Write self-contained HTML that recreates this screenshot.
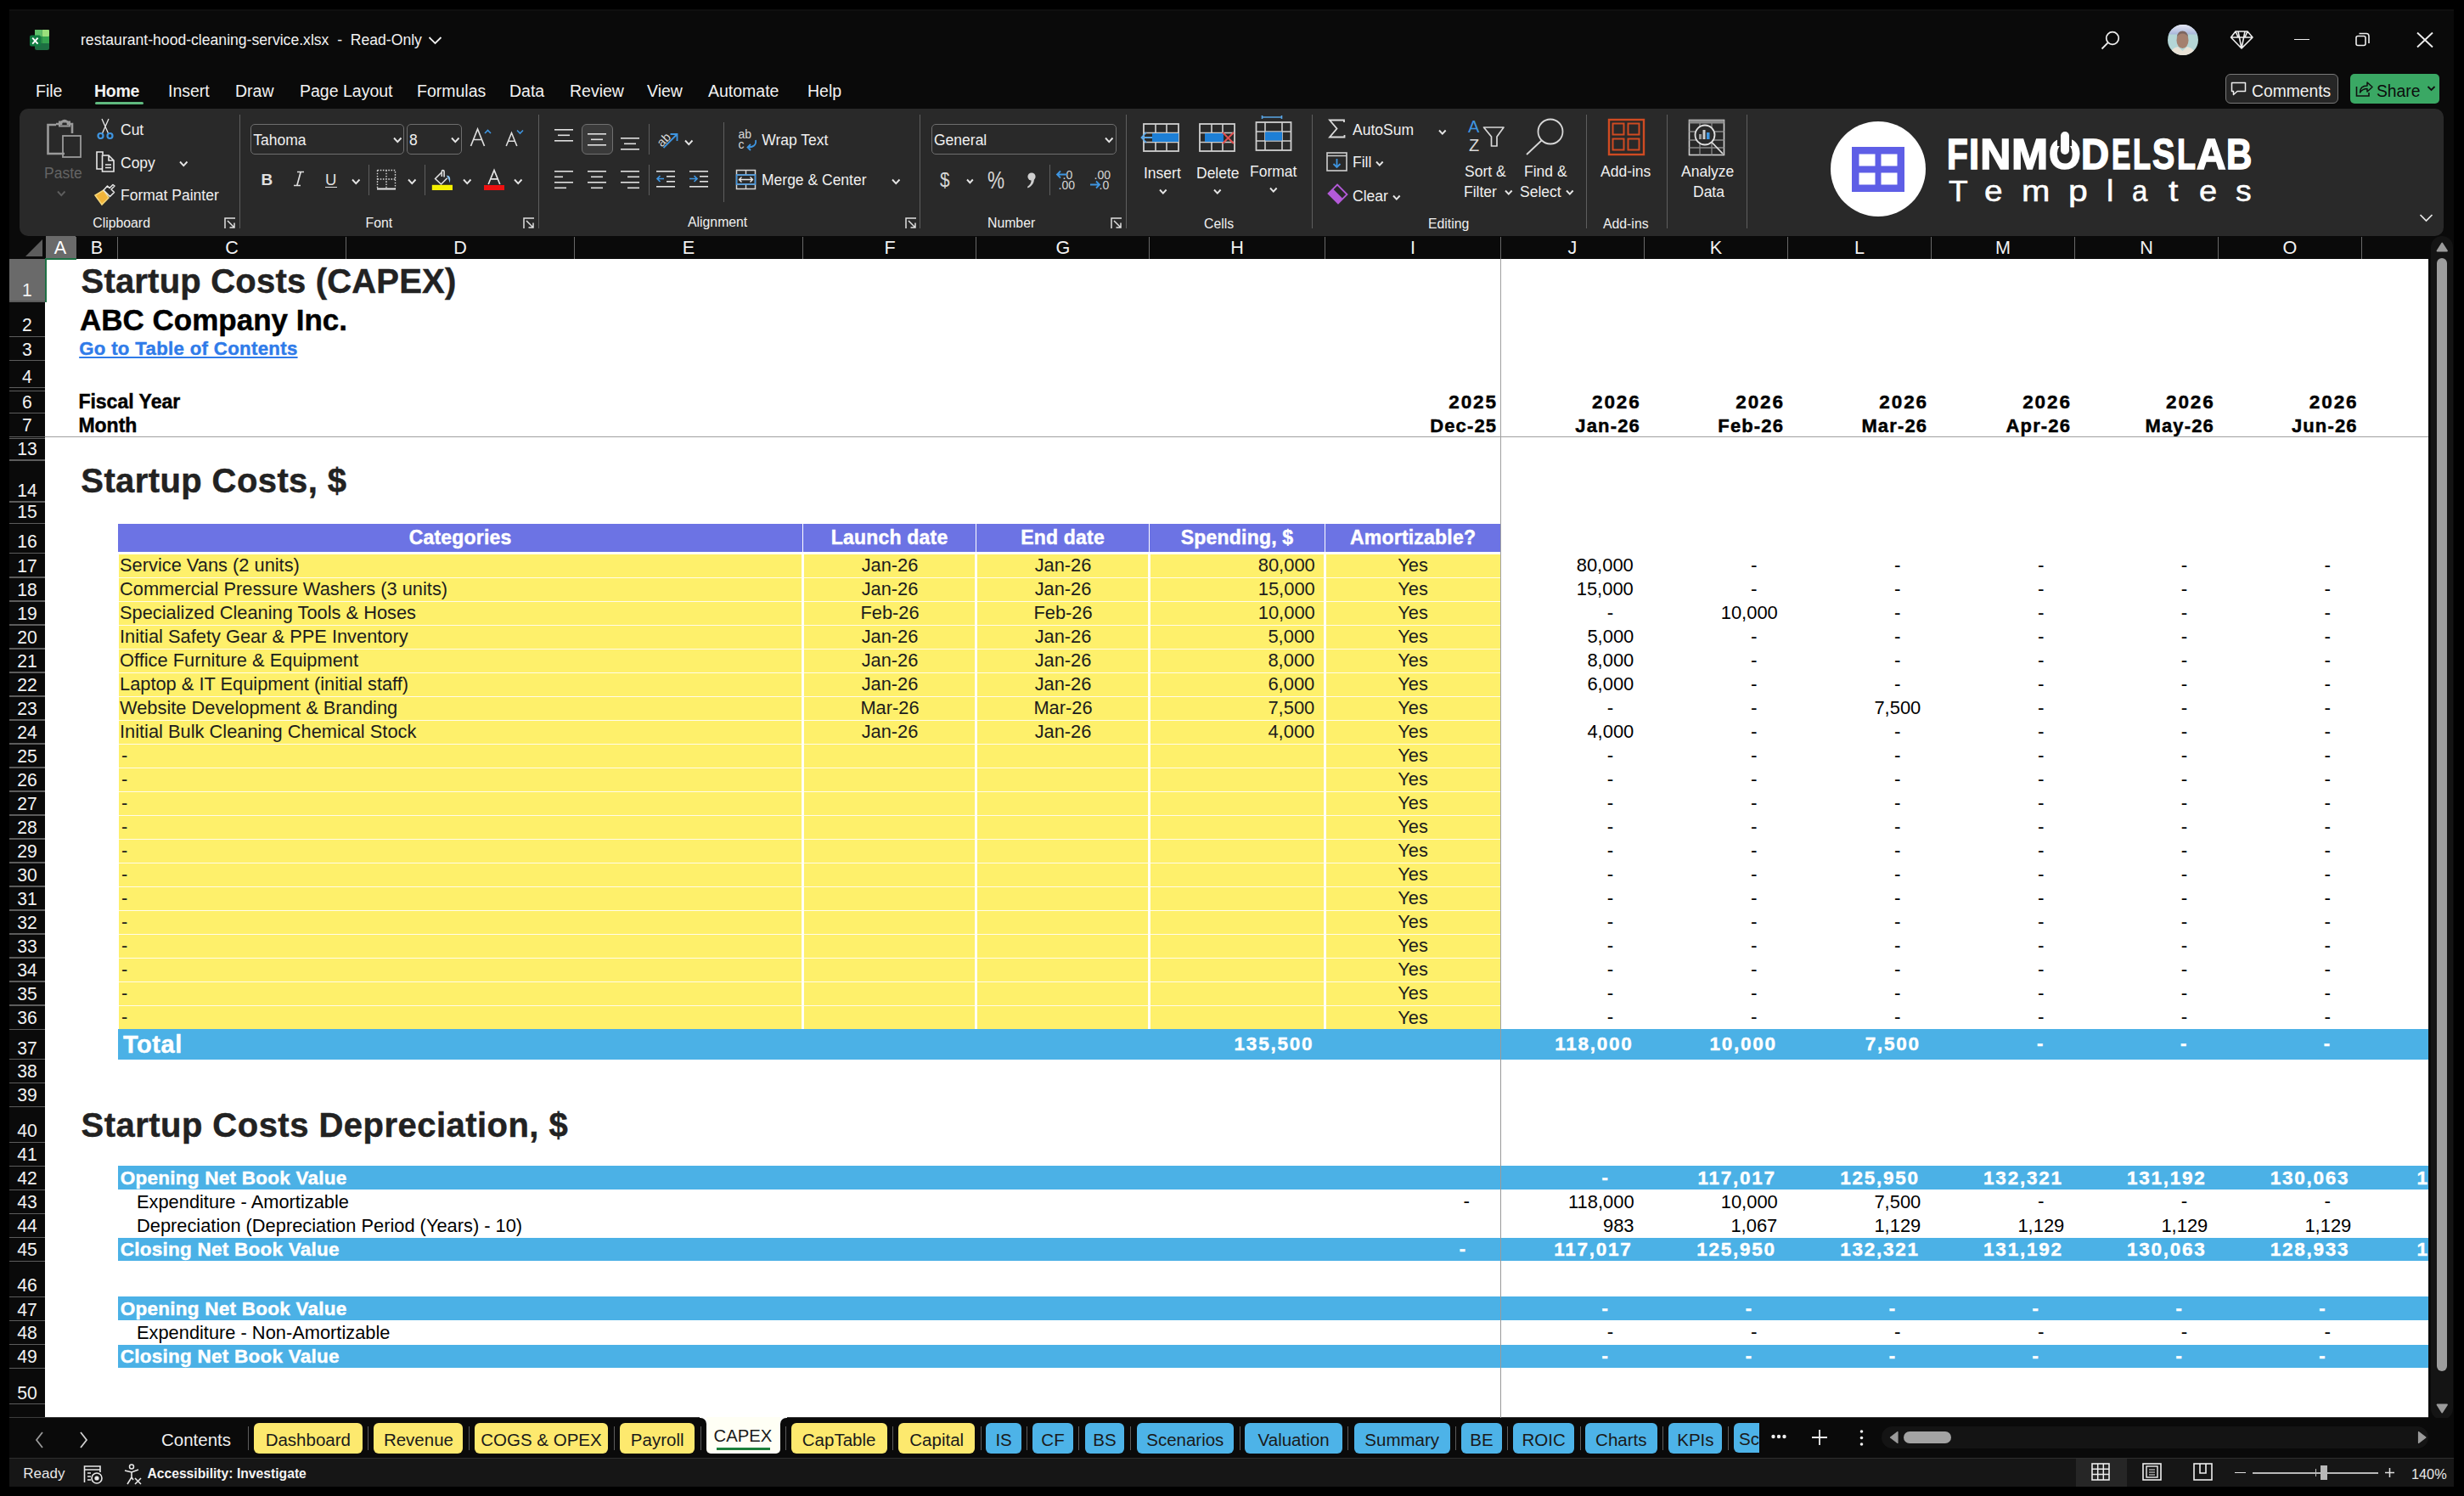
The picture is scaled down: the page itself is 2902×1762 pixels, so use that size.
<!DOCTYPE html><html><head><meta charset="utf-8"><style>
html,body{margin:0;padding:0;}
body{width:2902px;height:1762px;background:#000;position:relative;overflow:hidden;font-family:"Liberation Sans",sans-serif;}
.t{position:absolute;white-space:nowrap;line-height:1;}
.r{position:absolute;}
svg{position:absolute;overflow:visible;}
</style></head><body>
<div class="r" style="left:11.0px;top:10.8px;width:2879.0px;height:1740.2px;background:#0a0a0a;"></div>
<div class="r" style="left:11.0px;top:10.8px;width:2879.0px;height:2.7px;background:#0f0f0f;"></div>
<div class="r" style="left:23.0px;top:128.0px;width:2855.0px;height:149.8px;background:#292929;border-radius:10px;"></div>
<div class="r" style="left:53.0px;top:305.0px;width:2807.5px;height:1365.0px;background:#ffffff;"></div>
<div class="r" style="left:53.5px;top:278.0px;width:35.5px;height:26.5px;background:#6a6a6a;"></div>
<div class="r" style="left:88.5px;top:279.0px;width:1.2px;height:26.0px;background:#686868;"></div>
<div class="t" style="top:280.8px;font-size:22.5px;color:#f2f2f2;font-weight:normal;left:-486.2px;width:1200px;text-align:center;transform:scaleX(0.96);transform-origin:50% 0;">B</div>
<div class="r" style="left:138.0px;top:279.0px;width:1.2px;height:26.0px;background:#686868;"></div>
<div class="t" style="top:280.8px;font-size:22.5px;color:#f2f2f2;font-weight:normal;left:-327.0px;width:1200px;text-align:center;transform:scaleX(0.96);transform-origin:50% 0;">C</div>
<div class="r" style="left:407.0px;top:279.0px;width:1.2px;height:26.0px;background:#686868;"></div>
<div class="t" style="top:280.8px;font-size:22.5px;color:#f2f2f2;font-weight:normal;left:-58.0px;width:1200px;text-align:center;transform:scaleX(0.96);transform-origin:50% 0;">D</div>
<div class="r" style="left:676.0px;top:279.0px;width:1.2px;height:26.0px;background:#686868;"></div>
<div class="t" style="top:280.8px;font-size:22.5px;color:#f2f2f2;font-weight:normal;left:211.0px;width:1200px;text-align:center;transform:scaleX(0.96);transform-origin:50% 0;">E</div>
<div class="r" style="left:945.0px;top:279.0px;width:1.2px;height:26.0px;background:#686868;"></div>
<div class="t" style="top:280.8px;font-size:22.5px;color:#f2f2f2;font-weight:normal;left:447.5px;width:1200px;text-align:center;transform:scaleX(0.96);transform-origin:50% 0;">F</div>
<div class="r" style="left:1149.0px;top:279.0px;width:1.2px;height:26.0px;background:#686868;"></div>
<div class="t" style="top:280.8px;font-size:22.5px;color:#f2f2f2;font-weight:normal;left:651.5px;width:1200px;text-align:center;transform:scaleX(0.96);transform-origin:50% 0;">G</div>
<div class="r" style="left:1353.0px;top:279.0px;width:1.2px;height:26.0px;background:#686868;"></div>
<div class="t" style="top:280.8px;font-size:22.5px;color:#f2f2f2;font-weight:normal;left:857.0px;width:1200px;text-align:center;transform:scaleX(0.96);transform-origin:50% 0;">H</div>
<div class="r" style="left:1560.0px;top:279.0px;width:1.2px;height:26.0px;background:#686868;"></div>
<div class="t" style="top:280.8px;font-size:22.5px;color:#f2f2f2;font-weight:normal;left:1064.0px;width:1200px;text-align:center;transform:scaleX(0.96);transform-origin:50% 0;">I</div>
<div class="r" style="left:1767.0px;top:279.0px;width:1.2px;height:26.0px;background:#686868;"></div>
<div class="t" style="top:280.8px;font-size:22.5px;color:#f2f2f2;font-weight:normal;left:1251.9px;width:1200px;text-align:center;transform:scaleX(0.96);transform-origin:50% 0;">J</div>
<div class="r" style="left:1935.8px;top:279.0px;width:1.2px;height:26.0px;background:#686868;"></div>
<div class="t" style="top:280.8px;font-size:22.5px;color:#f2f2f2;font-weight:normal;left:1420.9px;width:1200px;text-align:center;transform:scaleX(0.96);transform-origin:50% 0;">K</div>
<div class="r" style="left:2105.0px;top:279.0px;width:1.2px;height:26.0px;background:#686868;"></div>
<div class="t" style="top:280.8px;font-size:22.5px;color:#f2f2f2;font-weight:normal;left:1590.1px;width:1200px;text-align:center;transform:scaleX(0.96);transform-origin:50% 0;">L</div>
<div class="r" style="left:2274.1px;top:279.0px;width:1.2px;height:26.0px;background:#686868;"></div>
<div class="t" style="top:280.8px;font-size:22.5px;color:#f2f2f2;font-weight:normal;left:1759.0px;width:1200px;text-align:center;transform:scaleX(0.96);transform-origin:50% 0;">M</div>
<div class="r" style="left:2442.9px;top:279.0px;width:1.2px;height:26.0px;background:#686868;"></div>
<div class="t" style="top:280.8px;font-size:22.5px;color:#f2f2f2;font-weight:normal;left:1927.9px;width:1200px;text-align:center;transform:scaleX(0.96);transform-origin:50% 0;">N</div>
<div class="r" style="left:2611.8px;top:279.0px;width:1.2px;height:26.0px;background:#686868;"></div>
<div class="t" style="top:280.8px;font-size:22.5px;color:#f2f2f2;font-weight:normal;left:2096.7px;width:1200px;text-align:center;transform:scaleX(0.96);transform-origin:50% 0;">O</div>
<div class="r" style="left:2780.6px;top:279.0px;width:1.2px;height:26.0px;background:#686868;"></div>
<div class="t" style="top:280.8px;font-size:22.5px;color:#ffffff;font-weight:normal;left:-529.0px;width:1200px;text-align:center;transform:scaleX(0.96);transform-origin:50% 0;">A</div>
<svg style="left:0;top:0" width="60" height="310"><polygon points="50,282 50,302 30,302" fill="#5c5c5c"/></svg>
<div class="r" style="left:11.0px;top:305.4px;width:41.5px;height:49.2px;background:#6a6a6a;"></div>
<div class="r" style="left:11.0px;top:354.4px;width:42.0px;height:1.3px;background:#5c5c5c;"></div>
<div class="t" style="top:331.0px;font-size:22.5px;color:#f2f2f2;font-weight:normal;left:-568.0px;width:1200px;text-align:center;transform:scaleX(0.94);transform-origin:50% 0;">1</div>
<div class="r" style="left:11.0px;top:395.7px;width:42.0px;height:1.3px;background:#5c5c5c;"></div>
<div class="t" style="top:372.3px;font-size:22.5px;color:#f2f2f2;font-weight:normal;left:-568.0px;width:1200px;text-align:center;transform:scaleX(0.94);transform-origin:50% 0;">2</div>
<div class="r" style="left:11.0px;top:423.9px;width:42.0px;height:1.3px;background:#5c5c5c;"></div>
<div class="t" style="top:400.5px;font-size:22.5px;color:#f2f2f2;font-weight:normal;left:-568.0px;width:1200px;text-align:center;transform:scaleX(0.94);transform-origin:50% 0;">3</div>
<div class="r" style="left:11.0px;top:456.0px;width:42.0px;height:1.3px;background:#5c5c5c;"></div>
<div class="t" style="top:432.6px;font-size:22.5px;color:#f2f2f2;font-weight:normal;left:-568.0px;width:1200px;text-align:center;transform:scaleX(0.94);transform-origin:50% 0;">4</div>
<div class="r" style="left:11.0px;top:485.9px;width:42.0px;height:1.3px;background:#5c5c5c;"></div>
<div class="t" style="top:462.5px;font-size:22.5px;color:#f2f2f2;font-weight:normal;left:-568.0px;width:1200px;text-align:center;transform:scaleX(0.94);transform-origin:50% 0;">6</div>
<div class="r" style="left:11.0px;top:513.6px;width:42.0px;height:1.3px;background:#5c5c5c;"></div>
<div class="t" style="top:490.2px;font-size:22.5px;color:#f2f2f2;font-weight:normal;left:-568.0px;width:1200px;text-align:center;transform:scaleX(0.94);transform-origin:50% 0;">7</div>
<div class="r" style="left:11.0px;top:541.4px;width:42.0px;height:1.3px;background:#5c5c5c;"></div>
<div class="t" style="top:518.0px;font-size:22.5px;color:#f2f2f2;font-weight:normal;left:-568.0px;width:1200px;text-align:center;transform:scaleX(0.94);transform-origin:50% 0;">13</div>
<div class="r" style="left:11.0px;top:590.4px;width:42.0px;height:1.3px;background:#5c5c5c;"></div>
<div class="t" style="top:567.0px;font-size:22.5px;color:#f2f2f2;font-weight:normal;left:-568.0px;width:1200px;text-align:center;transform:scaleX(0.94);transform-origin:50% 0;">14</div>
<div class="r" style="left:11.0px;top:615.7px;width:42.0px;height:1.3px;background:#5c5c5c;"></div>
<div class="t" style="top:592.3px;font-size:22.5px;color:#f2f2f2;font-weight:normal;left:-568.0px;width:1200px;text-align:center;transform:scaleX(0.94);transform-origin:50% 0;">15</div>
<div class="r" style="left:11.0px;top:650.6px;width:42.0px;height:1.3px;background:#5c5c5c;"></div>
<div class="t" style="top:627.2px;font-size:22.5px;color:#f2f2f2;font-weight:normal;left:-568.0px;width:1200px;text-align:center;transform:scaleX(0.94);transform-origin:50% 0;">16</div>
<div class="r" style="left:11.0px;top:679.4px;width:42.0px;height:1.3px;background:#5c5c5c;"></div>
<div class="t" style="top:656.0px;font-size:22.5px;color:#f2f2f2;font-weight:normal;left:-568.0px;width:1200px;text-align:center;transform:scaleX(0.94);transform-origin:50% 0;">17</div>
<div class="r" style="left:11.0px;top:707.4px;width:42.0px;height:1.3px;background:#5c5c5c;"></div>
<div class="t" style="top:684.0px;font-size:22.5px;color:#f2f2f2;font-weight:normal;left:-568.0px;width:1200px;text-align:center;transform:scaleX(0.94);transform-origin:50% 0;">18</div>
<div class="r" style="left:11.0px;top:735.4px;width:42.0px;height:1.3px;background:#5c5c5c;"></div>
<div class="t" style="top:712.0px;font-size:22.5px;color:#f2f2f2;font-weight:normal;left:-568.0px;width:1200px;text-align:center;transform:scaleX(0.94);transform-origin:50% 0;">19</div>
<div class="r" style="left:11.0px;top:763.4px;width:42.0px;height:1.3px;background:#5c5c5c;"></div>
<div class="t" style="top:740.0px;font-size:22.5px;color:#f2f2f2;font-weight:normal;left:-568.0px;width:1200px;text-align:center;transform:scaleX(0.94);transform-origin:50% 0;">20</div>
<div class="r" style="left:11.0px;top:791.4px;width:42.0px;height:1.3px;background:#5c5c5c;"></div>
<div class="t" style="top:768.0px;font-size:22.5px;color:#f2f2f2;font-weight:normal;left:-568.0px;width:1200px;text-align:center;transform:scaleX(0.94);transform-origin:50% 0;">21</div>
<div class="r" style="left:11.0px;top:819.4px;width:42.0px;height:1.3px;background:#5c5c5c;"></div>
<div class="t" style="top:796.0px;font-size:22.5px;color:#f2f2f2;font-weight:normal;left:-568.0px;width:1200px;text-align:center;transform:scaleX(0.94);transform-origin:50% 0;">22</div>
<div class="r" style="left:11.0px;top:847.4px;width:42.0px;height:1.3px;background:#5c5c5c;"></div>
<div class="t" style="top:824.0px;font-size:22.5px;color:#f2f2f2;font-weight:normal;left:-568.0px;width:1200px;text-align:center;transform:scaleX(0.94);transform-origin:50% 0;">23</div>
<div class="r" style="left:11.0px;top:875.4px;width:42.0px;height:1.3px;background:#5c5c5c;"></div>
<div class="t" style="top:852.0px;font-size:22.5px;color:#f2f2f2;font-weight:normal;left:-568.0px;width:1200px;text-align:center;transform:scaleX(0.94);transform-origin:50% 0;">24</div>
<div class="r" style="left:11.0px;top:903.4px;width:42.0px;height:1.3px;background:#5c5c5c;"></div>
<div class="t" style="top:880.0px;font-size:22.5px;color:#f2f2f2;font-weight:normal;left:-568.0px;width:1200px;text-align:center;transform:scaleX(0.94);transform-origin:50% 0;">25</div>
<div class="r" style="left:11.0px;top:931.4px;width:42.0px;height:1.3px;background:#5c5c5c;"></div>
<div class="t" style="top:908.0px;font-size:22.5px;color:#f2f2f2;font-weight:normal;left:-568.0px;width:1200px;text-align:center;transform:scaleX(0.94);transform-origin:50% 0;">26</div>
<div class="r" style="left:11.0px;top:959.4px;width:42.0px;height:1.3px;background:#5c5c5c;"></div>
<div class="t" style="top:936.0px;font-size:22.5px;color:#f2f2f2;font-weight:normal;left:-568.0px;width:1200px;text-align:center;transform:scaleX(0.94);transform-origin:50% 0;">27</div>
<div class="r" style="left:11.0px;top:987.4px;width:42.0px;height:1.3px;background:#5c5c5c;"></div>
<div class="t" style="top:964.0px;font-size:22.5px;color:#f2f2f2;font-weight:normal;left:-568.0px;width:1200px;text-align:center;transform:scaleX(0.94);transform-origin:50% 0;">28</div>
<div class="r" style="left:11.0px;top:1015.4px;width:42.0px;height:1.3px;background:#5c5c5c;"></div>
<div class="t" style="top:992.0px;font-size:22.5px;color:#f2f2f2;font-weight:normal;left:-568.0px;width:1200px;text-align:center;transform:scaleX(0.94);transform-origin:50% 0;">29</div>
<div class="r" style="left:11.0px;top:1043.4px;width:42.0px;height:1.3px;background:#5c5c5c;"></div>
<div class="t" style="top:1020.0px;font-size:22.5px;color:#f2f2f2;font-weight:normal;left:-568.0px;width:1200px;text-align:center;transform:scaleX(0.94);transform-origin:50% 0;">30</div>
<div class="r" style="left:11.0px;top:1071.4px;width:42.0px;height:1.3px;background:#5c5c5c;"></div>
<div class="t" style="top:1048.0px;font-size:22.5px;color:#f2f2f2;font-weight:normal;left:-568.0px;width:1200px;text-align:center;transform:scaleX(0.94);transform-origin:50% 0;">31</div>
<div class="r" style="left:11.0px;top:1099.4px;width:42.0px;height:1.3px;background:#5c5c5c;"></div>
<div class="t" style="top:1076.0px;font-size:22.5px;color:#f2f2f2;font-weight:normal;left:-568.0px;width:1200px;text-align:center;transform:scaleX(0.94);transform-origin:50% 0;">32</div>
<div class="r" style="left:11.0px;top:1127.4px;width:42.0px;height:1.3px;background:#5c5c5c;"></div>
<div class="t" style="top:1104.0px;font-size:22.5px;color:#f2f2f2;font-weight:normal;left:-568.0px;width:1200px;text-align:center;transform:scaleX(0.94);transform-origin:50% 0;">33</div>
<div class="r" style="left:11.0px;top:1155.4px;width:42.0px;height:1.3px;background:#5c5c5c;"></div>
<div class="t" style="top:1132.0px;font-size:22.5px;color:#f2f2f2;font-weight:normal;left:-568.0px;width:1200px;text-align:center;transform:scaleX(0.94);transform-origin:50% 0;">34</div>
<div class="r" style="left:11.0px;top:1183.4px;width:42.0px;height:1.3px;background:#5c5c5c;"></div>
<div class="t" style="top:1160.0px;font-size:22.5px;color:#f2f2f2;font-weight:normal;left:-568.0px;width:1200px;text-align:center;transform:scaleX(0.94);transform-origin:50% 0;">35</div>
<div class="r" style="left:11.0px;top:1211.6px;width:42.0px;height:1.3px;background:#5c5c5c;"></div>
<div class="t" style="top:1188.2px;font-size:22.5px;color:#f2f2f2;font-weight:normal;left:-568.0px;width:1200px;text-align:center;transform:scaleX(0.94);transform-origin:50% 0;">36</div>
<div class="r" style="left:11.0px;top:1247.0px;width:42.0px;height:1.3px;background:#5c5c5c;"></div>
<div class="t" style="top:1223.6px;font-size:22.5px;color:#f2f2f2;font-weight:normal;left:-568.0px;width:1200px;text-align:center;transform:scaleX(0.94);transform-origin:50% 0;">37</div>
<div class="r" style="left:11.0px;top:1274.7px;width:42.0px;height:1.3px;background:#5c5c5c;"></div>
<div class="t" style="top:1251.3px;font-size:22.5px;color:#f2f2f2;font-weight:normal;left:-568.0px;width:1200px;text-align:center;transform:scaleX(0.94);transform-origin:50% 0;">38</div>
<div class="r" style="left:11.0px;top:1302.7px;width:42.0px;height:1.3px;background:#5c5c5c;"></div>
<div class="t" style="top:1279.3px;font-size:22.5px;color:#f2f2f2;font-weight:normal;left:-568.0px;width:1200px;text-align:center;transform:scaleX(0.94);transform-origin:50% 0;">39</div>
<div class="r" style="left:11.0px;top:1344.6px;width:42.0px;height:1.3px;background:#5c5c5c;"></div>
<div class="t" style="top:1321.2px;font-size:22.5px;color:#f2f2f2;font-weight:normal;left:-568.0px;width:1200px;text-align:center;transform:scaleX(0.94);transform-origin:50% 0;">40</div>
<div class="r" style="left:11.0px;top:1372.6px;width:42.0px;height:1.3px;background:#5c5c5c;"></div>
<div class="t" style="top:1349.2px;font-size:22.5px;color:#f2f2f2;font-weight:normal;left:-568.0px;width:1200px;text-align:center;transform:scaleX(0.94);transform-origin:50% 0;">41</div>
<div class="r" style="left:11.0px;top:1400.7px;width:42.0px;height:1.3px;background:#5c5c5c;"></div>
<div class="t" style="top:1377.3px;font-size:22.5px;color:#f2f2f2;font-weight:normal;left:-568.0px;width:1200px;text-align:center;transform:scaleX(0.94);transform-origin:50% 0;">42</div>
<div class="r" style="left:11.0px;top:1428.6px;width:42.0px;height:1.3px;background:#5c5c5c;"></div>
<div class="t" style="top:1405.2px;font-size:22.5px;color:#f2f2f2;font-weight:normal;left:-568.0px;width:1200px;text-align:center;transform:scaleX(0.94);transform-origin:50% 0;">43</div>
<div class="r" style="left:11.0px;top:1456.7px;width:42.0px;height:1.3px;background:#5c5c5c;"></div>
<div class="t" style="top:1433.3px;font-size:22.5px;color:#f2f2f2;font-weight:normal;left:-568.0px;width:1200px;text-align:center;transform:scaleX(0.94);transform-origin:50% 0;">44</div>
<div class="r" style="left:11.0px;top:1484.7px;width:42.0px;height:1.3px;background:#5c5c5c;"></div>
<div class="t" style="top:1461.3px;font-size:22.5px;color:#f2f2f2;font-weight:normal;left:-568.0px;width:1200px;text-align:center;transform:scaleX(0.94);transform-origin:50% 0;">45</div>
<div class="r" style="left:11.0px;top:1526.6px;width:42.0px;height:1.3px;background:#5c5c5c;"></div>
<div class="t" style="top:1503.2px;font-size:22.5px;color:#f2f2f2;font-weight:normal;left:-568.0px;width:1200px;text-align:center;transform:scaleX(0.94);transform-origin:50% 0;">46</div>
<div class="r" style="left:11.0px;top:1554.9px;width:42.0px;height:1.3px;background:#5c5c5c;"></div>
<div class="t" style="top:1531.5px;font-size:22.5px;color:#f2f2f2;font-weight:normal;left:-568.0px;width:1200px;text-align:center;transform:scaleX(0.94);transform-origin:50% 0;">47</div>
<div class="r" style="left:11.0px;top:1582.7px;width:42.0px;height:1.3px;background:#5c5c5c;"></div>
<div class="t" style="top:1559.3px;font-size:22.5px;color:#f2f2f2;font-weight:normal;left:-568.0px;width:1200px;text-align:center;transform:scaleX(0.94);transform-origin:50% 0;">48</div>
<div class="r" style="left:11.0px;top:1610.7px;width:42.0px;height:1.3px;background:#5c5c5c;"></div>
<div class="t" style="top:1587.3px;font-size:22.5px;color:#f2f2f2;font-weight:normal;left:-568.0px;width:1200px;text-align:center;transform:scaleX(0.94);transform-origin:50% 0;">49</div>
<div class="r" style="left:11.0px;top:1653.0px;width:42.0px;height:1.3px;background:#5c5c5c;"></div>
<div class="t" style="top:1629.6px;font-size:22.5px;color:#f2f2f2;font-weight:normal;left:-568.0px;width:1200px;text-align:center;transform:scaleX(0.94);transform-origin:50% 0;">50</div>
<div class="r" style="left:11.0px;top:460.0px;width:42.0px;height:1.2px;background:#5c5c5c;"></div>
<div class="r" style="left:11.0px;top:515.8px;width:42.0px;height:1.2px;background:#5c5c5c;"></div>
<div class="r" style="left:11.0px;top:1653.0px;width:42.0px;height:1.3px;background:#5c5c5c;"></div>
<div class="r" style="left:11.0px;top:1669.3px;width:2849.2px;height:1.0px;background:#3c3c3c;"></div>
<div class="r" style="left:52.5px;top:304.0px;width:37.5px;height:2.0px;background:#1e7145;"></div>
<div class="r" style="left:52.5px;top:304.0px;width:2.0px;height:52.0px;background:#1e7145;"></div>
<div class="t" style="top:311.0px;font-size:40px;color:#222222;font-weight:bold;letter-spacing:0.2px;left:95.5px;-webkit-text-stroke:0.45px #222222;">Startup Costs (CAPEX)</div>
<div class="t" style="top:358.9px;font-size:35px;color:#000000;font-weight:bold;left:94.0px;-webkit-text-stroke:0.45px #000000;">ABC Company Inc.</div>
<div class="t" style="top:399.5px;font-size:22.2px;color:#2f7be9;font-weight:bold;letter-spacing:0.33px;left:93.2px;-webkit-text-stroke:0.45px #2f7be9;text-decoration:underline;text-decoration-thickness:2px;text-underline-offset:2.2px;">Go to Table of Contents</div>
<div class="t" style="top:462.1px;font-size:23px;color:#000;font-weight:bold;left:92.4px;-webkit-text-stroke:0.45px #000;">Fiscal Year</div>
<div class="t" style="top:490.1px;font-size:23px;color:#000;font-weight:bold;left:92.4px;-webkit-text-stroke:0.45px #000;">Month</div>
<div class="t" style="top:462.6px;font-size:22.5px;color:#000;font-weight:bold;letter-spacing:1.9px;right:1138.1px;text-align:right;-webkit-text-stroke:0.45px #000;">2025</div>
<div class="t" style="top:491.0px;font-size:22px;color:#000;font-weight:bold;letter-spacing:1.15px;right:1138.8px;text-align:right;-webkit-text-stroke:0.45px #000;">Dec-25</div>
<div class="t" style="top:462.6px;font-size:22.5px;color:#000;font-weight:bold;letter-spacing:1.9px;right:969.3px;text-align:right;-webkit-text-stroke:0.45px #000;">2026</div>
<div class="t" style="top:491.0px;font-size:22px;color:#000;font-weight:bold;letter-spacing:1.15px;right:970.1px;text-align:right;-webkit-text-stroke:0.45px #000;">Jan-26</div>
<div class="t" style="top:462.6px;font-size:22.5px;color:#000;font-weight:bold;letter-spacing:1.9px;right:800.1px;text-align:right;-webkit-text-stroke:0.45px #000;">2026</div>
<div class="t" style="top:491.0px;font-size:22px;color:#000;font-weight:bold;letter-spacing:1.15px;right:800.9px;text-align:right;-webkit-text-stroke:0.45px #000;">Feb-26</div>
<div class="t" style="top:462.6px;font-size:22.5px;color:#000;font-weight:bold;letter-spacing:1.9px;right:631.0px;text-align:right;-webkit-text-stroke:0.45px #000;">2026</div>
<div class="t" style="top:491.0px;font-size:22px;color:#000;font-weight:bold;letter-spacing:1.15px;right:631.8px;text-align:right;-webkit-text-stroke:0.45px #000;">Mar-26</div>
<div class="t" style="top:462.6px;font-size:22.5px;color:#000;font-weight:bold;letter-spacing:1.9px;right:462.2px;text-align:right;-webkit-text-stroke:0.45px #000;">2026</div>
<div class="t" style="top:491.0px;font-size:22px;color:#000;font-weight:bold;letter-spacing:1.15px;right:462.9px;text-align:right;-webkit-text-stroke:0.45px #000;">Apr-26</div>
<div class="t" style="top:462.6px;font-size:22.5px;color:#000;font-weight:bold;letter-spacing:1.9px;right:293.3px;text-align:right;-webkit-text-stroke:0.45px #000;">2026</div>
<div class="t" style="top:491.0px;font-size:22px;color:#000;font-weight:bold;letter-spacing:1.15px;right:294.0px;text-align:right;-webkit-text-stroke:0.45px #000;">May-26</div>
<div class="t" style="top:462.6px;font-size:22.5px;color:#000;font-weight:bold;letter-spacing:1.9px;right:124.5px;text-align:right;-webkit-text-stroke:0.45px #000;">2026</div>
<div class="t" style="top:491.0px;font-size:22px;color:#000;font-weight:bold;letter-spacing:1.15px;right:125.3px;text-align:right;-webkit-text-stroke:0.45px #000;">Jun-26</div>
<div class="r" style="left:53.0px;top:513.8px;width:2807.5px;height:1.2px;background:#a0a0a0;"></div>
<div class="r" style="left:1767.0px;top:305.0px;width:1.2px;height:1365.0px;background:#a0a0a0;"></div>
<div class="t" style="top:545.6px;font-size:40px;color:#222222;font-weight:bold;letter-spacing:0.4px;left:95.3px;-webkit-text-stroke:0.45px #222222;">Startup Costs, $</div>
<div class="r" style="left:138.9px;top:616.8px;width:1628.1px;height:32.9px;background:#6c73e4;"></div>
<div class="r" style="left:944.9px;top:616.8px;width:1.3px;height:32.9px;background:#ffffff;"></div>
<div class="r" style="left:1148.9px;top:616.8px;width:1.3px;height:32.9px;background:#ffffff;"></div>
<div class="r" style="left:1352.9px;top:616.8px;width:1.3px;height:32.9px;background:#ffffff;"></div>
<div class="r" style="left:1559.9px;top:616.8px;width:1.3px;height:32.9px;background:#ffffff;"></div>
<div class="t" style="top:622.4px;font-size:23px;color:#fff;font-weight:bold;letter-spacing:0.2px;left:-58.0px;width:1200px;text-align:center;-webkit-text-stroke:0.45px #fff;text-indent:0.2px;">Categories</div>
<div class="t" style="top:622.4px;font-size:23px;color:#fff;font-weight:bold;letter-spacing:0.2px;left:447.5px;width:1200px;text-align:center;-webkit-text-stroke:0.45px #fff;text-indent:0.2px;">Launch date</div>
<div class="t" style="top:622.4px;font-size:23px;color:#fff;font-weight:bold;letter-spacing:0.2px;left:651.5px;width:1200px;text-align:center;-webkit-text-stroke:0.45px #fff;text-indent:0.2px;">End date</div>
<div class="t" style="top:622.4px;font-size:23px;color:#fff;font-weight:bold;letter-spacing:0.2px;left:857.0px;width:1200px;text-align:center;-webkit-text-stroke:0.45px #fff;text-indent:0.2px;">Spending, $</div>
<div class="t" style="top:622.4px;font-size:23px;color:#fff;font-weight:bold;letter-spacing:0.2px;left:1064.0px;width:1200px;text-align:center;-webkit-text-stroke:0.45px #fff;text-indent:0.2px;">Amortizable?</div>
<div class="r" style="left:139.0px;top:652.9px;width:1628.0px;height:559.3px;background:#fef06b;"></div>
<div class="r" style="left:139.0px;top:679.7px;width:1628.0px;height:1.6px;background:#fffce8;"></div>
<div class="r" style="left:139.0px;top:707.7px;width:1628.0px;height:1.6px;background:#fffce8;"></div>
<div class="r" style="left:139.0px;top:735.7px;width:1628.0px;height:1.6px;background:#fffce8;"></div>
<div class="r" style="left:139.0px;top:763.7px;width:1628.0px;height:1.6px;background:#fffce8;"></div>
<div class="r" style="left:139.0px;top:791.7px;width:1628.0px;height:1.6px;background:#fffce8;"></div>
<div class="r" style="left:139.0px;top:819.7px;width:1628.0px;height:1.6px;background:#fffce8;"></div>
<div class="r" style="left:139.0px;top:847.7px;width:1628.0px;height:1.6px;background:#fffce8;"></div>
<div class="r" style="left:139.0px;top:875.7px;width:1628.0px;height:1.6px;background:#fffce8;"></div>
<div class="r" style="left:139.0px;top:903.7px;width:1628.0px;height:1.6px;background:#fffce8;"></div>
<div class="r" style="left:139.0px;top:931.7px;width:1628.0px;height:1.6px;background:#fffce8;"></div>
<div class="r" style="left:139.0px;top:959.7px;width:1628.0px;height:1.6px;background:#fffce8;"></div>
<div class="r" style="left:139.0px;top:987.7px;width:1628.0px;height:1.6px;background:#fffce8;"></div>
<div class="r" style="left:139.0px;top:1015.7px;width:1628.0px;height:1.6px;background:#fffce8;"></div>
<div class="r" style="left:139.0px;top:1043.7px;width:1628.0px;height:1.6px;background:#fffce8;"></div>
<div class="r" style="left:139.0px;top:1071.7px;width:1628.0px;height:1.6px;background:#fffce8;"></div>
<div class="r" style="left:139.0px;top:1099.7px;width:1628.0px;height:1.6px;background:#fffce8;"></div>
<div class="r" style="left:139.0px;top:1127.7px;width:1628.0px;height:1.6px;background:#fffce8;"></div>
<div class="r" style="left:139.0px;top:1155.7px;width:1628.0px;height:1.6px;background:#fffce8;"></div>
<div class="r" style="left:139.0px;top:1183.7px;width:1628.0px;height:1.6px;background:#fffce8;"></div>
<div class="r" style="left:944.0px;top:652.9px;width:3.1px;height:559.3px;background:#fffef5;"></div>
<div class="r" style="left:1148.0px;top:652.9px;width:3.1px;height:559.3px;background:#fffef5;"></div>
<div class="r" style="left:1352.0px;top:652.9px;width:3.1px;height:559.3px;background:#fffef5;"></div>
<div class="r" style="left:1559.0px;top:652.9px;width:3.1px;height:559.3px;background:#fffef5;"></div>
<div class="r" style="left:138.5px;top:651.2px;width:1.5px;height:561.0px;background:#ffffff;"></div>
<div class="t" style="top:655.3px;font-size:22.5px;color:#1c1c1c;font-weight:normal;left:141.4px;transform:scaleX(0.97);transform-origin:0 0;">Service Vans (2 units)</div>
<div class="t" style="top:655.3px;font-size:22.5px;color:#1c1c1c;font-weight:normal;left:447.5px;width:1200px;text-align:center;transform:scaleX(0.97);transform-origin:50% 0;">Jan-26</div>
<div class="t" style="top:655.3px;font-size:22.5px;color:#1c1c1c;font-weight:normal;left:651.5px;width:1200px;text-align:center;transform:scaleX(0.97);transform-origin:50% 0;">Jan-26</div>
<div class="t" style="top:655.3px;font-size:22.5px;color:#1c1c1c;font-weight:normal;right:1353.5px;text-align:right;transform:scaleX(0.975);transform-origin:100% 0;">80,000</div>
<div class="t" style="top:655.3px;font-size:22.5px;color:#1c1c1c;font-weight:normal;left:1064.0px;width:1200px;text-align:center;transform:scaleX(0.97);transform-origin:50% 0;">Yes</div>
<div class="t" style="top:655.3px;font-size:22.5px;color:#000;font-weight:normal;right:977.7px;text-align:right;transform:scaleX(0.975);transform-origin:100% 0;">80,000</div>
<div class="t" style="top:653.5px;font-size:22.5px;color:#000;font-weight:normal;right:832.5px;text-align:right;margin-top:1.8px;">-</div>
<div class="t" style="top:653.5px;font-size:22.5px;color:#000;font-weight:normal;right:663.4px;text-align:right;margin-top:1.8px;">-</div>
<div class="t" style="top:653.5px;font-size:22.5px;color:#000;font-weight:normal;right:494.6px;text-align:right;margin-top:1.8px;">-</div>
<div class="t" style="top:653.5px;font-size:22.5px;color:#000;font-weight:normal;right:325.7px;text-align:right;margin-top:1.8px;">-</div>
<div class="t" style="top:653.5px;font-size:22.5px;color:#000;font-weight:normal;right:156.9px;text-align:right;margin-top:1.8px;">-</div>
<div class="t" style="top:683.3px;font-size:22.5px;color:#1c1c1c;font-weight:normal;left:141.4px;transform:scaleX(0.97);transform-origin:0 0;">Commercial Pressure Washers (3 units)</div>
<div class="t" style="top:683.3px;font-size:22.5px;color:#1c1c1c;font-weight:normal;left:447.5px;width:1200px;text-align:center;transform:scaleX(0.97);transform-origin:50% 0;">Jan-26</div>
<div class="t" style="top:683.3px;font-size:22.5px;color:#1c1c1c;font-weight:normal;left:651.5px;width:1200px;text-align:center;transform:scaleX(0.97);transform-origin:50% 0;">Jan-26</div>
<div class="t" style="top:683.3px;font-size:22.5px;color:#1c1c1c;font-weight:normal;right:1353.5px;text-align:right;transform:scaleX(0.975);transform-origin:100% 0;">15,000</div>
<div class="t" style="top:683.3px;font-size:22.5px;color:#1c1c1c;font-weight:normal;left:1064.0px;width:1200px;text-align:center;transform:scaleX(0.97);transform-origin:50% 0;">Yes</div>
<div class="t" style="top:683.3px;font-size:22.5px;color:#000;font-weight:normal;right:977.7px;text-align:right;transform:scaleX(0.975);transform-origin:100% 0;">15,000</div>
<div class="t" style="top:681.5px;font-size:22.5px;color:#000;font-weight:normal;right:832.5px;text-align:right;margin-top:1.8px;">-</div>
<div class="t" style="top:681.5px;font-size:22.5px;color:#000;font-weight:normal;right:663.4px;text-align:right;margin-top:1.8px;">-</div>
<div class="t" style="top:681.5px;font-size:22.5px;color:#000;font-weight:normal;right:494.6px;text-align:right;margin-top:1.8px;">-</div>
<div class="t" style="top:681.5px;font-size:22.5px;color:#000;font-weight:normal;right:325.7px;text-align:right;margin-top:1.8px;">-</div>
<div class="t" style="top:681.5px;font-size:22.5px;color:#000;font-weight:normal;right:156.9px;text-align:right;margin-top:1.8px;">-</div>
<div class="t" style="top:711.3px;font-size:22.5px;color:#1c1c1c;font-weight:normal;left:141.4px;transform:scaleX(0.97);transform-origin:0 0;">Specialized Cleaning Tools &amp; Hoses</div>
<div class="t" style="top:711.3px;font-size:22.5px;color:#1c1c1c;font-weight:normal;left:447.5px;width:1200px;text-align:center;transform:scaleX(0.97);transform-origin:50% 0;">Feb-26</div>
<div class="t" style="top:711.3px;font-size:22.5px;color:#1c1c1c;font-weight:normal;left:651.5px;width:1200px;text-align:center;transform:scaleX(0.97);transform-origin:50% 0;">Feb-26</div>
<div class="t" style="top:711.3px;font-size:22.5px;color:#1c1c1c;font-weight:normal;right:1353.5px;text-align:right;transform:scaleX(0.975);transform-origin:100% 0;">10,000</div>
<div class="t" style="top:711.3px;font-size:22.5px;color:#1c1c1c;font-weight:normal;left:1064.0px;width:1200px;text-align:center;transform:scaleX(0.97);transform-origin:50% 0;">Yes</div>
<div class="t" style="top:709.5px;font-size:22.5px;color:#000;font-weight:normal;right:1001.7px;text-align:right;margin-top:1.8px;">-</div>
<div class="t" style="top:711.3px;font-size:22.5px;color:#000;font-weight:normal;right:808.5px;text-align:right;transform:scaleX(0.975);transform-origin:100% 0;">10,000</div>
<div class="t" style="top:709.5px;font-size:22.5px;color:#000;font-weight:normal;right:663.4px;text-align:right;margin-top:1.8px;">-</div>
<div class="t" style="top:709.5px;font-size:22.5px;color:#000;font-weight:normal;right:494.6px;text-align:right;margin-top:1.8px;">-</div>
<div class="t" style="top:709.5px;font-size:22.5px;color:#000;font-weight:normal;right:325.7px;text-align:right;margin-top:1.8px;">-</div>
<div class="t" style="top:709.5px;font-size:22.5px;color:#000;font-weight:normal;right:156.9px;text-align:right;margin-top:1.8px;">-</div>
<div class="t" style="top:739.3px;font-size:22.5px;color:#1c1c1c;font-weight:normal;left:141.4px;transform:scaleX(0.97);transform-origin:0 0;">Initial Safety Gear &amp; PPE Inventory</div>
<div class="t" style="top:739.3px;font-size:22.5px;color:#1c1c1c;font-weight:normal;left:447.5px;width:1200px;text-align:center;transform:scaleX(0.97);transform-origin:50% 0;">Jan-26</div>
<div class="t" style="top:739.3px;font-size:22.5px;color:#1c1c1c;font-weight:normal;left:651.5px;width:1200px;text-align:center;transform:scaleX(0.97);transform-origin:50% 0;">Jan-26</div>
<div class="t" style="top:739.3px;font-size:22.5px;color:#1c1c1c;font-weight:normal;right:1353.5px;text-align:right;transform:scaleX(0.975);transform-origin:100% 0;">5,000</div>
<div class="t" style="top:739.3px;font-size:22.5px;color:#1c1c1c;font-weight:normal;left:1064.0px;width:1200px;text-align:center;transform:scaleX(0.97);transform-origin:50% 0;">Yes</div>
<div class="t" style="top:739.3px;font-size:22.5px;color:#000;font-weight:normal;right:977.7px;text-align:right;transform:scaleX(0.975);transform-origin:100% 0;">5,000</div>
<div class="t" style="top:737.5px;font-size:22.5px;color:#000;font-weight:normal;right:832.5px;text-align:right;margin-top:1.8px;">-</div>
<div class="t" style="top:737.5px;font-size:22.5px;color:#000;font-weight:normal;right:663.4px;text-align:right;margin-top:1.8px;">-</div>
<div class="t" style="top:737.5px;font-size:22.5px;color:#000;font-weight:normal;right:494.6px;text-align:right;margin-top:1.8px;">-</div>
<div class="t" style="top:737.5px;font-size:22.5px;color:#000;font-weight:normal;right:325.7px;text-align:right;margin-top:1.8px;">-</div>
<div class="t" style="top:737.5px;font-size:22.5px;color:#000;font-weight:normal;right:156.9px;text-align:right;margin-top:1.8px;">-</div>
<div class="t" style="top:767.3px;font-size:22.5px;color:#1c1c1c;font-weight:normal;left:141.4px;transform:scaleX(0.97);transform-origin:0 0;">Office Furniture &amp; Equipment</div>
<div class="t" style="top:767.3px;font-size:22.5px;color:#1c1c1c;font-weight:normal;left:447.5px;width:1200px;text-align:center;transform:scaleX(0.97);transform-origin:50% 0;">Jan-26</div>
<div class="t" style="top:767.3px;font-size:22.5px;color:#1c1c1c;font-weight:normal;left:651.5px;width:1200px;text-align:center;transform:scaleX(0.97);transform-origin:50% 0;">Jan-26</div>
<div class="t" style="top:767.3px;font-size:22.5px;color:#1c1c1c;font-weight:normal;right:1353.5px;text-align:right;transform:scaleX(0.975);transform-origin:100% 0;">8,000</div>
<div class="t" style="top:767.3px;font-size:22.5px;color:#1c1c1c;font-weight:normal;left:1064.0px;width:1200px;text-align:center;transform:scaleX(0.97);transform-origin:50% 0;">Yes</div>
<div class="t" style="top:767.3px;font-size:22.5px;color:#000;font-weight:normal;right:977.7px;text-align:right;transform:scaleX(0.975);transform-origin:100% 0;">8,000</div>
<div class="t" style="top:765.5px;font-size:22.5px;color:#000;font-weight:normal;right:832.5px;text-align:right;margin-top:1.8px;">-</div>
<div class="t" style="top:765.5px;font-size:22.5px;color:#000;font-weight:normal;right:663.4px;text-align:right;margin-top:1.8px;">-</div>
<div class="t" style="top:765.5px;font-size:22.5px;color:#000;font-weight:normal;right:494.6px;text-align:right;margin-top:1.8px;">-</div>
<div class="t" style="top:765.5px;font-size:22.5px;color:#000;font-weight:normal;right:325.7px;text-align:right;margin-top:1.8px;">-</div>
<div class="t" style="top:765.5px;font-size:22.5px;color:#000;font-weight:normal;right:156.9px;text-align:right;margin-top:1.8px;">-</div>
<div class="t" style="top:795.3px;font-size:22.5px;color:#1c1c1c;font-weight:normal;left:141.4px;transform:scaleX(0.97);transform-origin:0 0;">Laptop &amp; IT Equipment (initial staff)</div>
<div class="t" style="top:795.3px;font-size:22.5px;color:#1c1c1c;font-weight:normal;left:447.5px;width:1200px;text-align:center;transform:scaleX(0.97);transform-origin:50% 0;">Jan-26</div>
<div class="t" style="top:795.3px;font-size:22.5px;color:#1c1c1c;font-weight:normal;left:651.5px;width:1200px;text-align:center;transform:scaleX(0.97);transform-origin:50% 0;">Jan-26</div>
<div class="t" style="top:795.3px;font-size:22.5px;color:#1c1c1c;font-weight:normal;right:1353.5px;text-align:right;transform:scaleX(0.975);transform-origin:100% 0;">6,000</div>
<div class="t" style="top:795.3px;font-size:22.5px;color:#1c1c1c;font-weight:normal;left:1064.0px;width:1200px;text-align:center;transform:scaleX(0.97);transform-origin:50% 0;">Yes</div>
<div class="t" style="top:795.3px;font-size:22.5px;color:#000;font-weight:normal;right:977.7px;text-align:right;transform:scaleX(0.975);transform-origin:100% 0;">6,000</div>
<div class="t" style="top:793.5px;font-size:22.5px;color:#000;font-weight:normal;right:832.5px;text-align:right;margin-top:1.8px;">-</div>
<div class="t" style="top:793.5px;font-size:22.5px;color:#000;font-weight:normal;right:663.4px;text-align:right;margin-top:1.8px;">-</div>
<div class="t" style="top:793.5px;font-size:22.5px;color:#000;font-weight:normal;right:494.6px;text-align:right;margin-top:1.8px;">-</div>
<div class="t" style="top:793.5px;font-size:22.5px;color:#000;font-weight:normal;right:325.7px;text-align:right;margin-top:1.8px;">-</div>
<div class="t" style="top:793.5px;font-size:22.5px;color:#000;font-weight:normal;right:156.9px;text-align:right;margin-top:1.8px;">-</div>
<div class="t" style="top:823.3px;font-size:22.5px;color:#1c1c1c;font-weight:normal;left:141.4px;transform:scaleX(0.97);transform-origin:0 0;">Website Development &amp; Branding</div>
<div class="t" style="top:823.3px;font-size:22.5px;color:#1c1c1c;font-weight:normal;left:447.5px;width:1200px;text-align:center;transform:scaleX(0.97);transform-origin:50% 0;">Mar-26</div>
<div class="t" style="top:823.3px;font-size:22.5px;color:#1c1c1c;font-weight:normal;left:651.5px;width:1200px;text-align:center;transform:scaleX(0.97);transform-origin:50% 0;">Mar-26</div>
<div class="t" style="top:823.3px;font-size:22.5px;color:#1c1c1c;font-weight:normal;right:1353.5px;text-align:right;transform:scaleX(0.975);transform-origin:100% 0;">7,500</div>
<div class="t" style="top:823.3px;font-size:22.5px;color:#1c1c1c;font-weight:normal;left:1064.0px;width:1200px;text-align:center;transform:scaleX(0.97);transform-origin:50% 0;">Yes</div>
<div class="t" style="top:821.5px;font-size:22.5px;color:#000;font-weight:normal;right:1001.7px;text-align:right;margin-top:1.8px;">-</div>
<div class="t" style="top:821.5px;font-size:22.5px;color:#000;font-weight:normal;right:832.5px;text-align:right;margin-top:1.8px;">-</div>
<div class="t" style="top:823.3px;font-size:22.5px;color:#000;font-weight:normal;right:639.4px;text-align:right;transform:scaleX(0.975);transform-origin:100% 0;">7,500</div>
<div class="t" style="top:821.5px;font-size:22.5px;color:#000;font-weight:normal;right:494.6px;text-align:right;margin-top:1.8px;">-</div>
<div class="t" style="top:821.5px;font-size:22.5px;color:#000;font-weight:normal;right:325.7px;text-align:right;margin-top:1.8px;">-</div>
<div class="t" style="top:821.5px;font-size:22.5px;color:#000;font-weight:normal;right:156.9px;text-align:right;margin-top:1.8px;">-</div>
<div class="t" style="top:851.3px;font-size:22.5px;color:#1c1c1c;font-weight:normal;left:141.4px;transform:scaleX(0.97);transform-origin:0 0;">Initial Bulk Cleaning Chemical Stock</div>
<div class="t" style="top:851.3px;font-size:22.5px;color:#1c1c1c;font-weight:normal;left:447.5px;width:1200px;text-align:center;transform:scaleX(0.97);transform-origin:50% 0;">Jan-26</div>
<div class="t" style="top:851.3px;font-size:22.5px;color:#1c1c1c;font-weight:normal;left:651.5px;width:1200px;text-align:center;transform:scaleX(0.97);transform-origin:50% 0;">Jan-26</div>
<div class="t" style="top:851.3px;font-size:22.5px;color:#1c1c1c;font-weight:normal;right:1353.5px;text-align:right;transform:scaleX(0.975);transform-origin:100% 0;">4,000</div>
<div class="t" style="top:851.3px;font-size:22.5px;color:#1c1c1c;font-weight:normal;left:1064.0px;width:1200px;text-align:center;transform:scaleX(0.97);transform-origin:50% 0;">Yes</div>
<div class="t" style="top:851.3px;font-size:22.5px;color:#000;font-weight:normal;right:977.7px;text-align:right;transform:scaleX(0.975);transform-origin:100% 0;">4,000</div>
<div class="t" style="top:849.5px;font-size:22.5px;color:#000;font-weight:normal;right:832.5px;text-align:right;margin-top:1.8px;">-</div>
<div class="t" style="top:849.5px;font-size:22.5px;color:#000;font-weight:normal;right:663.4px;text-align:right;margin-top:1.8px;">-</div>
<div class="t" style="top:849.5px;font-size:22.5px;color:#000;font-weight:normal;right:494.6px;text-align:right;margin-top:1.8px;">-</div>
<div class="t" style="top:849.5px;font-size:22.5px;color:#000;font-weight:normal;right:325.7px;text-align:right;margin-top:1.8px;">-</div>
<div class="t" style="top:849.5px;font-size:22.5px;color:#000;font-weight:normal;right:156.9px;text-align:right;margin-top:1.8px;">-</div>
<div class="t" style="top:877.5px;font-size:22.5px;color:#1c1c1c;font-weight:normal;left:142.5px;transform:scaleX(0.97);transform-origin:0 0;margin-top:1.8px;">-</div>
<div class="t" style="top:879.3px;font-size:22.5px;color:#1c1c1c;font-weight:normal;left:1064.0px;width:1200px;text-align:center;transform:scaleX(0.97);transform-origin:50% 0;">Yes</div>
<div class="t" style="top:877.5px;font-size:22.5px;color:#000;font-weight:normal;right:1001.7px;text-align:right;margin-top:1.8px;">-</div>
<div class="t" style="top:877.5px;font-size:22.5px;color:#000;font-weight:normal;right:832.5px;text-align:right;margin-top:1.8px;">-</div>
<div class="t" style="top:877.5px;font-size:22.5px;color:#000;font-weight:normal;right:663.4px;text-align:right;margin-top:1.8px;">-</div>
<div class="t" style="top:877.5px;font-size:22.5px;color:#000;font-weight:normal;right:494.6px;text-align:right;margin-top:1.8px;">-</div>
<div class="t" style="top:877.5px;font-size:22.5px;color:#000;font-weight:normal;right:325.7px;text-align:right;margin-top:1.8px;">-</div>
<div class="t" style="top:877.5px;font-size:22.5px;color:#000;font-weight:normal;right:156.9px;text-align:right;margin-top:1.8px;">-</div>
<div class="t" style="top:905.5px;font-size:22.5px;color:#1c1c1c;font-weight:normal;left:142.5px;transform:scaleX(0.97);transform-origin:0 0;margin-top:1.8px;">-</div>
<div class="t" style="top:907.3px;font-size:22.5px;color:#1c1c1c;font-weight:normal;left:1064.0px;width:1200px;text-align:center;transform:scaleX(0.97);transform-origin:50% 0;">Yes</div>
<div class="t" style="top:905.5px;font-size:22.5px;color:#000;font-weight:normal;right:1001.7px;text-align:right;margin-top:1.8px;">-</div>
<div class="t" style="top:905.5px;font-size:22.5px;color:#000;font-weight:normal;right:832.5px;text-align:right;margin-top:1.8px;">-</div>
<div class="t" style="top:905.5px;font-size:22.5px;color:#000;font-weight:normal;right:663.4px;text-align:right;margin-top:1.8px;">-</div>
<div class="t" style="top:905.5px;font-size:22.5px;color:#000;font-weight:normal;right:494.6px;text-align:right;margin-top:1.8px;">-</div>
<div class="t" style="top:905.5px;font-size:22.5px;color:#000;font-weight:normal;right:325.7px;text-align:right;margin-top:1.8px;">-</div>
<div class="t" style="top:905.5px;font-size:22.5px;color:#000;font-weight:normal;right:156.9px;text-align:right;margin-top:1.8px;">-</div>
<div class="t" style="top:933.5px;font-size:22.5px;color:#1c1c1c;font-weight:normal;left:142.5px;transform:scaleX(0.97);transform-origin:0 0;margin-top:1.8px;">-</div>
<div class="t" style="top:935.3px;font-size:22.5px;color:#1c1c1c;font-weight:normal;left:1064.0px;width:1200px;text-align:center;transform:scaleX(0.97);transform-origin:50% 0;">Yes</div>
<div class="t" style="top:933.5px;font-size:22.5px;color:#000;font-weight:normal;right:1001.7px;text-align:right;margin-top:1.8px;">-</div>
<div class="t" style="top:933.5px;font-size:22.5px;color:#000;font-weight:normal;right:832.5px;text-align:right;margin-top:1.8px;">-</div>
<div class="t" style="top:933.5px;font-size:22.5px;color:#000;font-weight:normal;right:663.4px;text-align:right;margin-top:1.8px;">-</div>
<div class="t" style="top:933.5px;font-size:22.5px;color:#000;font-weight:normal;right:494.6px;text-align:right;margin-top:1.8px;">-</div>
<div class="t" style="top:933.5px;font-size:22.5px;color:#000;font-weight:normal;right:325.7px;text-align:right;margin-top:1.8px;">-</div>
<div class="t" style="top:933.5px;font-size:22.5px;color:#000;font-weight:normal;right:156.9px;text-align:right;margin-top:1.8px;">-</div>
<div class="t" style="top:961.5px;font-size:22.5px;color:#1c1c1c;font-weight:normal;left:142.5px;transform:scaleX(0.97);transform-origin:0 0;margin-top:1.8px;">-</div>
<div class="t" style="top:963.3px;font-size:22.5px;color:#1c1c1c;font-weight:normal;left:1064.0px;width:1200px;text-align:center;transform:scaleX(0.97);transform-origin:50% 0;">Yes</div>
<div class="t" style="top:961.5px;font-size:22.5px;color:#000;font-weight:normal;right:1001.7px;text-align:right;margin-top:1.8px;">-</div>
<div class="t" style="top:961.5px;font-size:22.5px;color:#000;font-weight:normal;right:832.5px;text-align:right;margin-top:1.8px;">-</div>
<div class="t" style="top:961.5px;font-size:22.5px;color:#000;font-weight:normal;right:663.4px;text-align:right;margin-top:1.8px;">-</div>
<div class="t" style="top:961.5px;font-size:22.5px;color:#000;font-weight:normal;right:494.6px;text-align:right;margin-top:1.8px;">-</div>
<div class="t" style="top:961.5px;font-size:22.5px;color:#000;font-weight:normal;right:325.7px;text-align:right;margin-top:1.8px;">-</div>
<div class="t" style="top:961.5px;font-size:22.5px;color:#000;font-weight:normal;right:156.9px;text-align:right;margin-top:1.8px;">-</div>
<div class="t" style="top:989.5px;font-size:22.5px;color:#1c1c1c;font-weight:normal;left:142.5px;transform:scaleX(0.97);transform-origin:0 0;margin-top:1.8px;">-</div>
<div class="t" style="top:991.3px;font-size:22.5px;color:#1c1c1c;font-weight:normal;left:1064.0px;width:1200px;text-align:center;transform:scaleX(0.97);transform-origin:50% 0;">Yes</div>
<div class="t" style="top:989.5px;font-size:22.5px;color:#000;font-weight:normal;right:1001.7px;text-align:right;margin-top:1.8px;">-</div>
<div class="t" style="top:989.5px;font-size:22.5px;color:#000;font-weight:normal;right:832.5px;text-align:right;margin-top:1.8px;">-</div>
<div class="t" style="top:989.5px;font-size:22.5px;color:#000;font-weight:normal;right:663.4px;text-align:right;margin-top:1.8px;">-</div>
<div class="t" style="top:989.5px;font-size:22.5px;color:#000;font-weight:normal;right:494.6px;text-align:right;margin-top:1.8px;">-</div>
<div class="t" style="top:989.5px;font-size:22.5px;color:#000;font-weight:normal;right:325.7px;text-align:right;margin-top:1.8px;">-</div>
<div class="t" style="top:989.5px;font-size:22.5px;color:#000;font-weight:normal;right:156.9px;text-align:right;margin-top:1.8px;">-</div>
<div class="t" style="top:1017.5px;font-size:22.5px;color:#1c1c1c;font-weight:normal;left:142.5px;transform:scaleX(0.97);transform-origin:0 0;margin-top:1.8px;">-</div>
<div class="t" style="top:1019.3px;font-size:22.5px;color:#1c1c1c;font-weight:normal;left:1064.0px;width:1200px;text-align:center;transform:scaleX(0.97);transform-origin:50% 0;">Yes</div>
<div class="t" style="top:1017.5px;font-size:22.5px;color:#000;font-weight:normal;right:1001.7px;text-align:right;margin-top:1.8px;">-</div>
<div class="t" style="top:1017.5px;font-size:22.5px;color:#000;font-weight:normal;right:832.5px;text-align:right;margin-top:1.8px;">-</div>
<div class="t" style="top:1017.5px;font-size:22.5px;color:#000;font-weight:normal;right:663.4px;text-align:right;margin-top:1.8px;">-</div>
<div class="t" style="top:1017.5px;font-size:22.5px;color:#000;font-weight:normal;right:494.6px;text-align:right;margin-top:1.8px;">-</div>
<div class="t" style="top:1017.5px;font-size:22.5px;color:#000;font-weight:normal;right:325.7px;text-align:right;margin-top:1.8px;">-</div>
<div class="t" style="top:1017.5px;font-size:22.5px;color:#000;font-weight:normal;right:156.9px;text-align:right;margin-top:1.8px;">-</div>
<div class="t" style="top:1045.5px;font-size:22.5px;color:#1c1c1c;font-weight:normal;left:142.5px;transform:scaleX(0.97);transform-origin:0 0;margin-top:1.8px;">-</div>
<div class="t" style="top:1047.3px;font-size:22.5px;color:#1c1c1c;font-weight:normal;left:1064.0px;width:1200px;text-align:center;transform:scaleX(0.97);transform-origin:50% 0;">Yes</div>
<div class="t" style="top:1045.5px;font-size:22.5px;color:#000;font-weight:normal;right:1001.7px;text-align:right;margin-top:1.8px;">-</div>
<div class="t" style="top:1045.5px;font-size:22.5px;color:#000;font-weight:normal;right:832.5px;text-align:right;margin-top:1.8px;">-</div>
<div class="t" style="top:1045.5px;font-size:22.5px;color:#000;font-weight:normal;right:663.4px;text-align:right;margin-top:1.8px;">-</div>
<div class="t" style="top:1045.5px;font-size:22.5px;color:#000;font-weight:normal;right:494.6px;text-align:right;margin-top:1.8px;">-</div>
<div class="t" style="top:1045.5px;font-size:22.5px;color:#000;font-weight:normal;right:325.7px;text-align:right;margin-top:1.8px;">-</div>
<div class="t" style="top:1045.5px;font-size:22.5px;color:#000;font-weight:normal;right:156.9px;text-align:right;margin-top:1.8px;">-</div>
<div class="t" style="top:1073.5px;font-size:22.5px;color:#1c1c1c;font-weight:normal;left:142.5px;transform:scaleX(0.97);transform-origin:0 0;margin-top:1.8px;">-</div>
<div class="t" style="top:1075.3px;font-size:22.5px;color:#1c1c1c;font-weight:normal;left:1064.0px;width:1200px;text-align:center;transform:scaleX(0.97);transform-origin:50% 0;">Yes</div>
<div class="t" style="top:1073.5px;font-size:22.5px;color:#000;font-weight:normal;right:1001.7px;text-align:right;margin-top:1.8px;">-</div>
<div class="t" style="top:1073.5px;font-size:22.5px;color:#000;font-weight:normal;right:832.5px;text-align:right;margin-top:1.8px;">-</div>
<div class="t" style="top:1073.5px;font-size:22.5px;color:#000;font-weight:normal;right:663.4px;text-align:right;margin-top:1.8px;">-</div>
<div class="t" style="top:1073.5px;font-size:22.5px;color:#000;font-weight:normal;right:494.6px;text-align:right;margin-top:1.8px;">-</div>
<div class="t" style="top:1073.5px;font-size:22.5px;color:#000;font-weight:normal;right:325.7px;text-align:right;margin-top:1.8px;">-</div>
<div class="t" style="top:1073.5px;font-size:22.5px;color:#000;font-weight:normal;right:156.9px;text-align:right;margin-top:1.8px;">-</div>
<div class="t" style="top:1101.5px;font-size:22.5px;color:#1c1c1c;font-weight:normal;left:142.5px;transform:scaleX(0.97);transform-origin:0 0;margin-top:1.8px;">-</div>
<div class="t" style="top:1103.3px;font-size:22.5px;color:#1c1c1c;font-weight:normal;left:1064.0px;width:1200px;text-align:center;transform:scaleX(0.97);transform-origin:50% 0;">Yes</div>
<div class="t" style="top:1101.5px;font-size:22.5px;color:#000;font-weight:normal;right:1001.7px;text-align:right;margin-top:1.8px;">-</div>
<div class="t" style="top:1101.5px;font-size:22.5px;color:#000;font-weight:normal;right:832.5px;text-align:right;margin-top:1.8px;">-</div>
<div class="t" style="top:1101.5px;font-size:22.5px;color:#000;font-weight:normal;right:663.4px;text-align:right;margin-top:1.8px;">-</div>
<div class="t" style="top:1101.5px;font-size:22.5px;color:#000;font-weight:normal;right:494.6px;text-align:right;margin-top:1.8px;">-</div>
<div class="t" style="top:1101.5px;font-size:22.5px;color:#000;font-weight:normal;right:325.7px;text-align:right;margin-top:1.8px;">-</div>
<div class="t" style="top:1101.5px;font-size:22.5px;color:#000;font-weight:normal;right:156.9px;text-align:right;margin-top:1.8px;">-</div>
<div class="t" style="top:1129.5px;font-size:22.5px;color:#1c1c1c;font-weight:normal;left:142.5px;transform:scaleX(0.97);transform-origin:0 0;margin-top:1.8px;">-</div>
<div class="t" style="top:1131.3px;font-size:22.5px;color:#1c1c1c;font-weight:normal;left:1064.0px;width:1200px;text-align:center;transform:scaleX(0.97);transform-origin:50% 0;">Yes</div>
<div class="t" style="top:1129.5px;font-size:22.5px;color:#000;font-weight:normal;right:1001.7px;text-align:right;margin-top:1.8px;">-</div>
<div class="t" style="top:1129.5px;font-size:22.5px;color:#000;font-weight:normal;right:832.5px;text-align:right;margin-top:1.8px;">-</div>
<div class="t" style="top:1129.5px;font-size:22.5px;color:#000;font-weight:normal;right:663.4px;text-align:right;margin-top:1.8px;">-</div>
<div class="t" style="top:1129.5px;font-size:22.5px;color:#000;font-weight:normal;right:494.6px;text-align:right;margin-top:1.8px;">-</div>
<div class="t" style="top:1129.5px;font-size:22.5px;color:#000;font-weight:normal;right:325.7px;text-align:right;margin-top:1.8px;">-</div>
<div class="t" style="top:1129.5px;font-size:22.5px;color:#000;font-weight:normal;right:156.9px;text-align:right;margin-top:1.8px;">-</div>
<div class="t" style="top:1157.5px;font-size:22.5px;color:#1c1c1c;font-weight:normal;left:142.5px;transform:scaleX(0.97);transform-origin:0 0;margin-top:1.8px;">-</div>
<div class="t" style="top:1159.3px;font-size:22.5px;color:#1c1c1c;font-weight:normal;left:1064.0px;width:1200px;text-align:center;transform:scaleX(0.97);transform-origin:50% 0;">Yes</div>
<div class="t" style="top:1157.5px;font-size:22.5px;color:#000;font-weight:normal;right:1001.7px;text-align:right;margin-top:1.8px;">-</div>
<div class="t" style="top:1157.5px;font-size:22.5px;color:#000;font-weight:normal;right:832.5px;text-align:right;margin-top:1.8px;">-</div>
<div class="t" style="top:1157.5px;font-size:22.5px;color:#000;font-weight:normal;right:663.4px;text-align:right;margin-top:1.8px;">-</div>
<div class="t" style="top:1157.5px;font-size:22.5px;color:#000;font-weight:normal;right:494.6px;text-align:right;margin-top:1.8px;">-</div>
<div class="t" style="top:1157.5px;font-size:22.5px;color:#000;font-weight:normal;right:325.7px;text-align:right;margin-top:1.8px;">-</div>
<div class="t" style="top:1157.5px;font-size:22.5px;color:#000;font-weight:normal;right:156.9px;text-align:right;margin-top:1.8px;">-</div>
<div class="t" style="top:1185.7px;font-size:22.5px;color:#1c1c1c;font-weight:normal;left:142.5px;transform:scaleX(0.97);transform-origin:0 0;margin-top:1.8px;">-</div>
<div class="t" style="top:1187.5px;font-size:22.5px;color:#1c1c1c;font-weight:normal;left:1064.0px;width:1200px;text-align:center;transform:scaleX(0.97);transform-origin:50% 0;">Yes</div>
<div class="t" style="top:1185.7px;font-size:22.5px;color:#000;font-weight:normal;right:1001.7px;text-align:right;margin-top:1.8px;">-</div>
<div class="t" style="top:1185.7px;font-size:22.5px;color:#000;font-weight:normal;right:832.5px;text-align:right;margin-top:1.8px;">-</div>
<div class="t" style="top:1185.7px;font-size:22.5px;color:#000;font-weight:normal;right:663.4px;text-align:right;margin-top:1.8px;">-</div>
<div class="t" style="top:1185.7px;font-size:22.5px;color:#000;font-weight:normal;right:494.6px;text-align:right;margin-top:1.8px;">-</div>
<div class="t" style="top:1185.7px;font-size:22.5px;color:#000;font-weight:normal;right:325.7px;text-align:right;margin-top:1.8px;">-</div>
<div class="t" style="top:1185.7px;font-size:22.5px;color:#000;font-weight:normal;right:156.9px;text-align:right;margin-top:1.8px;">-</div>
<div class="r" style="left:138.5px;top:1212.2px;width:2722.0px;height:35.5px;background:#4bb1e6;"></div>
<div class="t" style="top:1216.1px;font-size:29px;color:#fff;font-weight:bold;letter-spacing:0.6px;left:144.9px;-webkit-text-stroke:0.45px #fff;">Total</div>
<div class="t" style="top:1219.1px;font-size:22.5px;color:#fff;font-weight:bold;letter-spacing:1.75px;right:1354.8px;text-align:right;-webkit-text-stroke:0.45px #fff;">135,500</div>
<div class="t" style="top:1219.1px;font-size:22.5px;color:#fff;font-weight:bold;letter-spacing:1.75px;right:978.5px;text-align:right;-webkit-text-stroke:0.45px #fff;">118,000</div>
<div class="t" style="top:1219.1px;font-size:22.5px;color:#fff;font-weight:bold;letter-spacing:1.75px;right:809.3px;text-align:right;-webkit-text-stroke:0.45px #fff;">10,000</div>
<div class="t" style="top:1219.1px;font-size:22.5px;color:#fff;font-weight:bold;letter-spacing:1.75px;right:640.2px;text-align:right;-webkit-text-stroke:0.45px #fff;">7,500</div>
<div class="t" style="top:1217.7px;font-size:22px;color:#fff;font-weight:bold;right:495.6px;text-align:right;-webkit-text-stroke:0.45px #fff;">-</div>
<div class="t" style="top:1217.7px;font-size:22px;color:#fff;font-weight:bold;right:326.7px;text-align:right;-webkit-text-stroke:0.45px #fff;">-</div>
<div class="t" style="top:1217.7px;font-size:22px;color:#fff;font-weight:bold;right:157.9px;text-align:right;-webkit-text-stroke:0.45px #fff;">-</div>
<div class="t" style="top:1305.4px;font-size:40px;color:#222222;font-weight:bold;letter-spacing:0.47px;left:95.5px;-webkit-text-stroke:0.45px #222222;">Startup Costs Depreciation, $</div>
<div class="r" style="left:138.5px;top:1373.4px;width:2722.0px;height:27.9px;background:#4bb1e6;"></div>
<div class="t" style="top:1376.9px;font-size:22.5px;color:#fff;font-weight:bold;letter-spacing:0.25px;left:141.8px;-webkit-text-stroke:0.45px #fff;">Opening Net Book Value</div>
<div class="t" style="top:1375.5px;font-size:22px;color:#fff;font-weight:bold;right:1008.2px;text-align:right;-webkit-text-stroke:0.45px #fff;">-</div>
<div class="t" style="top:1376.9px;font-size:22.5px;color:#fff;font-weight:bold;letter-spacing:1.75px;right:810.2px;text-align:right;-webkit-text-stroke:0.45px #fff;">117,017</div>
<div class="t" style="top:1376.9px;font-size:22.5px;color:#fff;font-weight:bold;letter-spacing:1.75px;right:641.2px;text-align:right;-webkit-text-stroke:0.45px #fff;">125,950</div>
<div class="t" style="top:1376.9px;font-size:22.5px;color:#fff;font-weight:bold;letter-spacing:1.75px;right:472.3px;text-align:right;-webkit-text-stroke:0.45px #fff;">132,321</div>
<div class="t" style="top:1376.9px;font-size:22.5px;color:#fff;font-weight:bold;letter-spacing:1.75px;right:303.4px;text-align:right;-webkit-text-stroke:0.45px #fff;">131,192</div>
<div class="t" style="top:1376.9px;font-size:22.5px;color:#fff;font-weight:bold;letter-spacing:1.75px;right:134.7px;text-align:right;-webkit-text-stroke:0.45px #fff;">130,063</div>
<div class="t" style="top:1376.9px;font-size:22.5px;color:#fff;font-weight:bold;letter-spacing:1.75px;right:-38.2px;text-align:right;-webkit-text-stroke:0.45px #fff;">128,933</div>
<div class="t" style="top:1405.3px;font-size:22.5px;color:#000;font-weight:normal;left:161.0px;transform:scaleX(0.97);transform-origin:0 0;">Expenditure - Amortizable</div>
<div class="t" style="top:1403.5px;font-size:22.5px;color:#000;font-weight:normal;right:1171.0px;text-align:right;">-</div>
<div class="t" style="top:1405.3px;font-size:22.5px;color:#000;font-weight:normal;right:977.7px;text-align:right;transform:scaleX(0.975);transform-origin:100% 0;">118,000</div>
<div class="t" style="top:1405.3px;font-size:22.5px;color:#000;font-weight:normal;right:808.5px;text-align:right;transform:scaleX(0.975);transform-origin:100% 0;">10,000</div>
<div class="t" style="top:1405.3px;font-size:22.5px;color:#000;font-weight:normal;right:639.4px;text-align:right;transform:scaleX(0.975);transform-origin:100% 0;">7,500</div>
<div class="t" style="top:1403.5px;font-size:22.5px;color:#000;font-weight:normal;right:494.6px;text-align:right;">-</div>
<div class="t" style="top:1403.5px;font-size:22.5px;color:#000;font-weight:normal;right:325.7px;text-align:right;">-</div>
<div class="t" style="top:1403.5px;font-size:22.5px;color:#000;font-weight:normal;right:156.9px;text-align:right;">-</div>
<div class="t" style="top:1433.4px;font-size:22.5px;color:#000;font-weight:normal;left:161.0px;transform:scaleX(0.97);transform-origin:0 0;">Depreciation (Depreciation Period (Years) - 10)</div>
<div class="t" style="top:1433.4px;font-size:22.5px;color:#000;font-weight:normal;right:977.7px;text-align:right;transform:scaleX(0.975);transform-origin:100% 0;">983</div>
<div class="t" style="top:1433.4px;font-size:22.5px;color:#000;font-weight:normal;right:808.5px;text-align:right;transform:scaleX(0.975);transform-origin:100% 0;">1,067</div>
<div class="t" style="top:1433.4px;font-size:22.5px;color:#000;font-weight:normal;right:639.4px;text-align:right;transform:scaleX(0.975);transform-origin:100% 0;">1,129</div>
<div class="t" style="top:1433.4px;font-size:22.5px;color:#000;font-weight:normal;right:470.6px;text-align:right;transform:scaleX(0.975);transform-origin:100% 0;">1,129</div>
<div class="t" style="top:1433.4px;font-size:22.5px;color:#000;font-weight:normal;right:301.7px;text-align:right;transform:scaleX(0.975);transform-origin:100% 0;">1,129</div>
<div class="t" style="top:1433.4px;font-size:22.5px;color:#000;font-weight:normal;right:132.9px;text-align:right;transform:scaleX(0.975);transform-origin:100% 0;">1,129</div>
<div class="r" style="left:138.5px;top:1457.5px;width:2722.0px;height:27.8px;background:#4bb1e6;"></div>
<div class="t" style="top:1460.9px;font-size:22.5px;color:#fff;font-weight:bold;letter-spacing:0.25px;left:141.8px;-webkit-text-stroke:0.45px #fff;">Closing Net Book Value</div>
<div class="t" style="top:1459.5px;font-size:22px;color:#fff;font-weight:bold;right:1176.0px;text-align:right;-webkit-text-stroke:0.45px #fff;">-</div>
<div class="t" style="top:1460.9px;font-size:22.5px;color:#fff;font-weight:bold;letter-spacing:1.75px;right:979.5px;text-align:right;-webkit-text-stroke:0.45px #fff;">117,017</div>
<div class="t" style="top:1460.9px;font-size:22.5px;color:#fff;font-weight:bold;letter-spacing:1.75px;right:810.2px;text-align:right;-webkit-text-stroke:0.45px #fff;">125,950</div>
<div class="t" style="top:1460.9px;font-size:22.5px;color:#fff;font-weight:bold;letter-spacing:1.75px;right:641.2px;text-align:right;-webkit-text-stroke:0.45px #fff;">132,321</div>
<div class="t" style="top:1460.9px;font-size:22.5px;color:#fff;font-weight:bold;letter-spacing:1.75px;right:472.3px;text-align:right;-webkit-text-stroke:0.45px #fff;">131,192</div>
<div class="t" style="top:1460.9px;font-size:22.5px;color:#fff;font-weight:bold;letter-spacing:1.75px;right:303.4px;text-align:right;-webkit-text-stroke:0.45px #fff;">130,063</div>
<div class="t" style="top:1460.9px;font-size:22.5px;color:#fff;font-weight:bold;letter-spacing:1.75px;right:134.7px;text-align:right;-webkit-text-stroke:0.45px #fff;">128,933</div>
<div class="t" style="top:1460.9px;font-size:22.5px;color:#fff;font-weight:bold;letter-spacing:1.75px;right:-38.2px;text-align:right;-webkit-text-stroke:0.45px #fff;">127,804</div>
<div class="r" style="left:138.5px;top:1527.4px;width:2722.0px;height:28.1px;background:#4bb1e6;"></div>
<div class="t" style="top:1531.1px;font-size:22.5px;color:#fff;font-weight:bold;letter-spacing:0.25px;left:141.8px;-webkit-text-stroke:0.45px #fff;">Opening Net Book Value</div>
<div class="t" style="top:1529.7px;font-size:22px;color:#fff;font-weight:bold;right:1008.2px;text-align:right;-webkit-text-stroke:0.45px #fff;">-</div>
<div class="t" style="top:1529.7px;font-size:22px;color:#fff;font-weight:bold;right:839.0px;text-align:right;-webkit-text-stroke:0.45px #fff;">-</div>
<div class="t" style="top:1529.7px;font-size:22px;color:#fff;font-weight:bold;right:669.9px;text-align:right;-webkit-text-stroke:0.45px #fff;">-</div>
<div class="t" style="top:1529.7px;font-size:22px;color:#fff;font-weight:bold;right:501.1px;text-align:right;-webkit-text-stroke:0.45px #fff;">-</div>
<div class="t" style="top:1529.7px;font-size:22px;color:#fff;font-weight:bold;right:332.2px;text-align:right;-webkit-text-stroke:0.45px #fff;">-</div>
<div class="t" style="top:1529.7px;font-size:22px;color:#fff;font-weight:bold;right:163.4px;text-align:right;-webkit-text-stroke:0.45px #fff;">-</div>
<div class="t" style="top:1559.4px;font-size:22.5px;color:#000;font-weight:normal;left:161.0px;transform:scaleX(0.97);transform-origin:0 0;">Expenditure - Non-Amortizable</div>
<div class="t" style="top:1557.6px;font-size:22.5px;color:#000;font-weight:normal;right:1001.7px;text-align:right;">-</div>
<div class="t" style="top:1557.6px;font-size:22.5px;color:#000;font-weight:normal;right:832.5px;text-align:right;">-</div>
<div class="t" style="top:1557.6px;font-size:22.5px;color:#000;font-weight:normal;right:663.4px;text-align:right;">-</div>
<div class="t" style="top:1557.6px;font-size:22.5px;color:#000;font-weight:normal;right:494.6px;text-align:right;">-</div>
<div class="t" style="top:1557.6px;font-size:22.5px;color:#000;font-weight:normal;right:325.7px;text-align:right;">-</div>
<div class="t" style="top:1557.6px;font-size:22.5px;color:#000;font-weight:normal;right:156.9px;text-align:right;">-</div>
<div class="r" style="left:138.5px;top:1583.5px;width:2722.0px;height:27.8px;background:#4bb1e6;"></div>
<div class="t" style="top:1586.9px;font-size:22.5px;color:#fff;font-weight:bold;letter-spacing:0.25px;left:141.8px;-webkit-text-stroke:0.45px #fff;">Closing Net Book Value</div>
<div class="t" style="top:1585.5px;font-size:22px;color:#fff;font-weight:bold;right:1008.2px;text-align:right;-webkit-text-stroke:0.45px #fff;">-</div>
<div class="t" style="top:1585.5px;font-size:22px;color:#fff;font-weight:bold;right:839.0px;text-align:right;-webkit-text-stroke:0.45px #fff;">-</div>
<div class="t" style="top:1585.5px;font-size:22px;color:#fff;font-weight:bold;right:669.9px;text-align:right;-webkit-text-stroke:0.45px #fff;">-</div>
<div class="t" style="top:1585.5px;font-size:22px;color:#fff;font-weight:bold;right:501.1px;text-align:right;-webkit-text-stroke:0.45px #fff;">-</div>
<div class="t" style="top:1585.5px;font-size:22px;color:#fff;font-weight:bold;right:332.2px;text-align:right;-webkit-text-stroke:0.45px #fff;">-</div>
<div class="t" style="top:1585.5px;font-size:22px;color:#fff;font-weight:bold;right:163.4px;text-align:right;-webkit-text-stroke:0.45px #fff;">-</div>
<div class="r" style="left:1767.0px;top:1212.0px;width:1.2px;height:458.0px;background:#9a9a9a;"></div>
<div class="r" style="left:2860.2px;top:278.0px;width:29.8px;height:1392.0px;background:#0a0a0a;"></div>
<div class="r" style="left:2862.8px;top:278.4px;width:26.7px;height:1393.3px;background:#141414;border-radius:14px;"></div>
<div class="r" style="left:2890.0px;top:270.0px;width:12.0px;height:1430.0px;background:#000000;"></div>
<svg style="left:35px;top:34px" width="24" height="26" viewBox="0 0 24 26"><rect x="6" y="1" width="17" height="24" rx="2.5" fill="#1d6f42"/><rect x="14.5" y="1" width="8.5" height="8" rx="1" fill="#9be07c"/><rect x="6" y="1" width="8.5" height="8" fill="#5fc06a"/><rect x="14.5" y="9" width="8.5" height="8" fill="#35a34f"/><rect x="6" y="9" width="8.5" height="8" fill="#2a8a48"/><rect x="0" y="7.5" width="13" height="13" rx="2" fill="#107c41"/><path d="M3.2 10.6 L9.6 17.6 M9.6 10.6 L3.2 17.6" stroke="#fff" stroke-width="1.9"/></svg>
<div class="t" style="top:39.3px;font-size:17.6px;color:#f2f2f2;font-weight:normal;left:95.0px;">restaurant-hood-cleaning-service.xlsx&nbsp;&nbsp;-&nbsp;&nbsp;Read-Only</div>
<svg style="left:504px;top:42px" width="18" height="12" viewBox="0 0 18 12"><path d="M1.5 2 L8.5 9 L15.5 2" stroke="#f0f0f0" stroke-width="1.8" fill="none"/></svg>
<div class="t" style="top:98.1px;font-size:19.5px;color:#f2f2f2;font-weight:normal;left:42.0px;">File</div>
<div class="t" style="top:98.1px;font-size:19.5px;color:#f2f2f2;font-weight:bold;letter-spacing:-0.3px;left:111.0px;">Home</div>
<div class="t" style="top:98.1px;font-size:19.5px;color:#f2f2f2;font-weight:normal;left:198.0px;">Insert</div>
<div class="t" style="top:98.1px;font-size:19.5px;color:#f2f2f2;font-weight:normal;left:277.0px;">Draw</div>
<div class="t" style="top:98.1px;font-size:19.5px;color:#f2f2f2;font-weight:normal;left:353.0px;">Page Layout</div>
<div class="t" style="top:98.1px;font-size:19.5px;color:#f2f2f2;font-weight:normal;left:491.0px;">Formulas</div>
<div class="t" style="top:98.1px;font-size:19.5px;color:#f2f2f2;font-weight:normal;left:600.0px;">Data</div>
<div class="t" style="top:98.1px;font-size:19.5px;color:#f2f2f2;font-weight:normal;left:671.0px;">Review</div>
<div class="t" style="top:98.1px;font-size:19.5px;color:#f2f2f2;font-weight:normal;left:762.0px;">View</div>
<div class="t" style="top:98.1px;font-size:19.5px;color:#f2f2f2;font-weight:normal;left:834.0px;">Automate</div>
<div class="t" style="top:98.1px;font-size:19.5px;color:#f2f2f2;font-weight:normal;left:951.0px;">Help</div>
<div class="r" style="left:111.5px;top:119.8px;width:57.2px;height:2.8px;background:#5fb97f;border-radius:2px;"></div>
<svg style="left:2474px;top:36px" width="24" height="24" viewBox="0 0 24 24"><circle cx="14" cy="9" r="7.3" stroke="#eee" stroke-width="1.7" fill="none"/><path d="M8.8 14.2 L1.5 21.5" stroke="#eee" stroke-width="1.8"/></svg>
<svg style="left:2553px;top:28.8px" width="36" height="36" viewBox="0 0 36 36"><defs><clipPath id="av"><circle cx="18" cy="18" r="18"/></clipPath><linearGradient id="sky" x1="0" y1="0" x2="0" y2="1"><stop offset="0" stop-color="#e6e8f4"/><stop offset="1" stop-color="#a8b6da"/></linearGradient></defs><g clip-path="url(#av)"><rect x="0" y="0" width="36" height="36" fill="#b4d6d6"/><rect x="0" y="0" width="36" height="11.5" fill="url(#sky)"/><ellipse cx="17.5" cy="18.5" rx="7" ry="9.5" fill="#a4806f"/><path d="M10.8 15 Q11.5 7.5 17.5 7.5 Q23.5 7.5 24.2 15 Q22 10.5 17.5 10.5 Q13 10.5 10.8 15 Z" fill="#7d6660"/><path d="M2 36 Q4 27.5 12 26 L17.5 31 L23 26 Q31 27.5 34 36 Z" fill="#e9e2d6"/></g></svg>
<svg style="left:2627px;top:35px" width="28" height="24" viewBox="0 0 28 24"><path d="M6 2 H20 L26 9 L13 22 L0.5 9 Z M0.5 9 H26 M9 2 L13 22 M17 2 L13 22 M6 2 L9 9 M20 2 L17 9" stroke="#eee" stroke-width="1.6" fill="none" stroke-linejoin="round"/></svg>
<div class="r" style="left:2702.0px;top:45.5px;width:18.0px;height:1.7px;background:#eee;"></div>
<svg style="left:2774px;top:38px" width="18" height="18" viewBox="0 0 18 18"><rect x="1" y="4.5" width="11" height="11" rx="2" stroke="#eee" stroke-width="1.6" fill="none"/><path d="M4.5 1.5 H13 a3 3 0 0 1 3 3 V13" stroke="#eee" stroke-width="1.6" fill="none"/></svg>
<svg style="left:2845px;top:37px" width="24" height="20" viewBox="0 0 24 20"><path d="M2 1.5 L20 18.5 M20 1.5 L2 18.5" stroke="#eee" stroke-width="1.8"/></svg>
<div class="r" style="left:2621px;top:87.4px;width:131px;height:32.4px;border:1.6px solid #787878;border-radius:6px;background:#262626;"></div>
<svg style="left:2627px;top:96px" width="20" height="18" viewBox="0 0 20 18"><path d="M1.5 1.5 H17.5 V11.5 H8 L3.5 15.5 V11.5 H1.5 Z" stroke="#eee" stroke-width="1.5" fill="none" stroke-linejoin="round"/></svg>
<div class="t" style="top:98.2px;font-size:19.3px;color:#f2f2f2;font-weight:normal;left:2652.0px;">Comments</div>
<div class="r" style="left:2768px;top:87px;width:105px;height:35px;border-radius:5px;background:#3aa864;"></div>
<svg style="left:2774px;top:95px" width="22" height="20" viewBox="0 0 22 20"><path d="M1.5 7 V18 H16 V14" stroke="#111" stroke-width="1.6" fill="none"/><path d="M5.5 14 C5.5 8.5 9 6 14 6 V2 L20 7.5 L14 13 V9.5 C10 9.5 7.5 11 5.5 14 Z" stroke="#111" stroke-width="1.5" fill="none" stroke-linejoin="round"/></svg>
<div class="t" style="top:98.3px;font-size:19.3px;color:#0c0c0c;font-weight:normal;left:2799.0px;">Share</div>
<svg style="left:2858px;top:100px" width="12" height="9" viewBox="0 0 12 9"><path d="M1.5 2 L5.5 6 L9.5 2" stroke="#111" stroke-width="1.8" fill="none"/></svg>
<svg style="left:54px;top:140px" width="44" height="48" viewBox="0 0 44 48"><path d="M12 6 H18 a4 4 0 0 1 8 0 H31 V17" stroke="#9a9a9a" stroke-width="2.6" fill="none"/><rect x="16" y="3.5" width="12" height="5" stroke="#9a9a9a" stroke-width="2" fill="none"/><path d="M22 41 H2.5 V7 H12" stroke="#9a9a9a" stroke-width="2.6" fill="none"/><rect x="20" y="20" width="21" height="25" stroke="#9a9a9a" stroke-width="1.8" fill="none"/></svg>
<div class="t" style="top:195.8px;font-size:17.5px;color:#646464;font-weight:normal;left:52.0px;">Paste</div>
<svg style="left:66.75px;top:224px" width="10.5" height="8" viewBox="0 0 10.5 8"><path d="M1 1.5 L5.25 6.175000000000001 L9.5 1.5" stroke="#5e5e5e" stroke-width="1.9" fill="none"/></svg>
<svg style="left:112px;top:139px" width="24" height="26" viewBox="0 0 24 26"><path d="M8 1 L15.5 18 M16 1 L8.5 18" stroke="#e8e8e8" stroke-width="1.3"/><circle cx="6.5" cy="21" r="3" stroke="#3f95e0" stroke-width="2.2" fill="none"/><circle cx="17.5" cy="21" r="3" stroke="#3f95e0" stroke-width="2.2" fill="none"/></svg>
<div class="t" style="top:144.9px;font-size:17.5px;color:#f0f0f0;font-weight:normal;left:142.0px;">Cut</div>
<svg style="left:111px;top:178px" width="26" height="26" viewBox="0 0 26 26"><path d="M10 4 V1 H3 V21 H9" stroke="#e8e8e8" stroke-width="1.6" fill="none"/><path d="M9.5 5 H17 L23 11 V24 H9.5 Z M17 5 V11 H23 M13 16 H20 M13 19.5 H20" stroke="#e8e8e8" stroke-width="1.6" fill="none"/></svg>
<div class="t" style="top:183.7px;font-size:17.5px;color:#f0f0f0;font-weight:normal;left:142.0px;">Copy</div>
<svg style="left:210.75px;top:189px" width="10.5" height="8" viewBox="0 0 10.5 8"><path d="M1 1.5 L5.25 6.175000000000001 L9.5 1.5" stroke="#e6e6e6" stroke-width="1.9" fill="none"/></svg>
<svg style="left:111px;top:217px" width="26" height="26" viewBox="0 0 26 26"><path d="M1 13 L9 24 L17 16 L11 7 Z" fill="#f0b43a"/><path d="M1 13 L9 24 L17 16 L11 7 Z" stroke="#f5d77a" stroke-width="1.5" fill="none"/><path d="M11 7 L18.5 14.5 L23.5 9.5 L20 6 L24 2 L22 0.5 L18 4.5 L15.5 2 Z" stroke="#e8e8e8" stroke-width="1.5" fill="#2a2a2a" stroke-linejoin="round"/></svg>
<div class="t" style="top:222.4px;font-size:17.5px;color:#f0f0f0;font-weight:normal;left:142.0px;">Format Painter</div>
<div class="t" style="top:255.0px;font-size:15.8px;color:#f0f0f0;font-weight:normal;left:109.3px;">Clipboard</div>
<svg style="left:264px;top:256px" width="14" height="14" viewBox="0 0 14 14"><path d="M1 13 V1 H13 M4 4 L12 12 M12 6.5 V12 H6.5" stroke="#e0e0e0" stroke-width="1.5" fill="none"/></svg>
<div class="r" style="left:282.0px;top:135.0px;width:1.2px;height:134.0px;background:#5e5e5e;"></div>
<div class="r" style="left:295px;top:146px;width:179px;height:34px;border:1.3px solid #6e6e6e;border-radius:5px;"></div>
<div class="t" style="top:156.8px;font-size:17.5px;color:#f0f0f0;font-weight:normal;left:298.3px;">Tahoma</div>
<svg style="left:462.75px;top:161px" width="10.5" height="8" viewBox="0 0 10.5 8"><path d="M1 1.5 L5.25 6.175000000000001 L9.5 1.5" stroke="#e6e6e6" stroke-width="1.9" fill="none"/></svg>
<div class="r" style="left:479px;top:146px;width:63px;height:34px;border:1.3px solid #6e6e6e;border-radius:5px;"></div>
<div class="t" style="top:156.8px;font-size:17.5px;color:#f0f0f0;font-weight:normal;left:482.0px;">8</div>
<svg style="left:530.75px;top:161px" width="10.5" height="8" viewBox="0 0 10.5 8"><path d="M1 1.5 L5.25 6.175000000000001 L9.5 1.5" stroke="#e6e6e6" stroke-width="1.9" fill="none"/></svg>
<svg style="left:553px;top:150px" width="20" height="24" viewBox="0 0 20 24"><path d="M1.5 22 L9.5 2 L17.5 22 M4.6 14.5 H14.4" stroke="#dedede" stroke-width="1.7" fill="none"/></svg>
<svg style="left:570px;top:152px" width="10" height="6" viewBox="0 0 10 6"><path d="M1 5 L4.5 1.5 L8 5" stroke="#3f95e0" stroke-width="1.6" fill="none"/></svg>
<svg style="left:595px;top:155px" width="16" height="19" viewBox="0 0 16 19"><path d="M1.2 17 L7.5 1.5 L13.8 17 M3.6 11.3 H11.4" stroke="#dedede" stroke-width="1.6" fill="none"/></svg>
<svg style="left:608px;top:152px" width="10" height="6" viewBox="0 0 10 6"><path d="M1 1.5 L4.5 5 L8 1.5" stroke="#3f95e0" stroke-width="1.6" fill="none"/></svg>
<div class="t" style="top:202.3px;font-size:19px;color:#e0e0e0;font-weight:bold;left:307.5px;">B</div>
<svg style="left:345px;top:201px" width="14" height="19" viewBox="0 0 14 19"><path d="M5 1.5 H13 M1 17.5 H9 M9.2 1.5 L4.8 17.5" stroke="#dedede" stroke-width="1.7" fill="none"/></svg>
<div class="t" style="top:202.7px;font-size:18.5px;color:#e0e0e0;font-weight:normal;left:383.0px;">U</div>
<div class="r" style="left:383.0px;top:219.8px;width:14.0px;height:1.5px;background:#e0e0e0;"></div>
<svg style="left:413.75px;top:210px" width="10.5" height="8" viewBox="0 0 10.5 8"><path d="M1 1.5 L5.25 6.175000000000001 L9.5 1.5" stroke="#e6e6e6" stroke-width="1.9" fill="none"/></svg>
<div class="r" style="left:434.0px;top:194.0px;width:1.2px;height:36.0px;background:#5e5e5e;"></div>
<svg style="left:443px;top:199px" width="26" height="26" viewBox="0 0 26 26"><path d="M1.5 1.5 H22.5 V22.5 M1.5 1.5 V22.5 M12 1.5 V22.5 M1.5 12 H22.5" stroke="#d8d8d8" stroke-width="1.4" stroke-dasharray="1.6 1.6" fill="none"/><path d="M1 23.5 H23" stroke="#e8e8e8" stroke-width="2"/></svg>
<svg style="left:479.75px;top:210px" width="10.5" height="8" viewBox="0 0 10.5 8"><path d="M1 1.5 L5.25 6.175000000000001 L9.5 1.5" stroke="#e6e6e6" stroke-width="1.9" fill="none"/></svg>
<div class="r" style="left:499.5px;top:194.0px;width:1.2px;height:36.0px;background:#5e5e5e;"></div>
<svg style="left:508px;top:199px" width="28" height="28" viewBox="0 0 28 28"><path d="M11.8 4.3 L4.6 11.5 L11.5 18 L18.7 10.8" stroke="#e0e0e0" stroke-width="1.6" fill="none" stroke-linejoin="miter"/><path d="M12.3 9 V3 a1.4 1.4 0 0 1 2.8 0 V9.5" stroke="#e0e0e0" stroke-width="1.6" fill="none"/><path d="M17.8 7.8 C21 7 23.5 10 21.6 16.5 C20.8 12.5 19.6 10.8 17.8 7.8 Z" fill="#8cc4f0"/><rect x="0.8" y="18.8" width="24.2" height="6.2" fill="#f4f000"/></svg>
<svg style="left:544.75px;top:210px" width="10.5" height="8" viewBox="0 0 10.5 8"><path d="M1 1.5 L5.25 6.175000000000001 L9.5 1.5" stroke="#e6e6e6" stroke-width="1.9" fill="none"/></svg>
<svg style="left:574px;top:199px" width="17" height="19" viewBox="0 0 17 19"><path d="M1.2 18 L8 1.5 L14.8 18 M3.8 11.8 H12.2" stroke="#e6e6e6" stroke-width="1.7" fill="none"/></svg>
<div class="r" style="left:569.9px;top:217.8px;width:24.4px;height:6.2px;background:#ee1111;"></div>
<svg style="left:604.75px;top:210px" width="10.5" height="8" viewBox="0 0 10.5 8"><path d="M1 1.5 L5.25 6.175000000000001 L9.5 1.5" stroke="#e6e6e6" stroke-width="1.9" fill="none"/></svg>
<div class="t" style="top:254.7px;font-size:15.8px;color:#f0f0f0;font-weight:normal;left:430.5px;">Font</div>
<svg style="left:616px;top:256px" width="14" height="14" viewBox="0 0 14 14"><path d="M1 13 V1 H13 M4 4 L12 12 M12 6.5 V12 H6.5" stroke="#e0e0e0" stroke-width="1.5" fill="none"/></svg>
<div class="r" style="left:633.5px;top:135.0px;width:1.2px;height:134.0px;background:#5e5e5e;"></div>
<svg style="left:653px;top:152px" width="26" height="30" viewBox="0 0 26 30"><rect x="0" y="0.0" width="22" height="1.6" fill="#e0e0e0"/><rect x="4" y="6.5" width="14" height="1.6" fill="#e0e0e0"/><rect x="0" y="13.0" width="22" height="1.6" fill="#e0e0e0"/></svg>
<div class="r" style="left:685px;top:146px;width:35px;height:34px;border:1.3px solid #707070;border-radius:6px;background:#3a3a3a;"></div>
<svg style="left:692px;top:156.5px" width="26" height="30" viewBox="0 0 26 30"><rect x="0" y="0.0" width="22" height="1.6" fill="#e0e0e0"/><rect x="4" y="6.5" width="14" height="1.6" fill="#e0e0e0"/><rect x="0" y="13.0" width="22" height="1.6" fill="#e0e0e0"/></svg>
<svg style="left:731px;top:162px" width="26" height="30" viewBox="0 0 26 30"><rect x="0" y="0.0" width="22" height="1.6" fill="#e0e0e0"/><rect x="4" y="6.5" width="14" height="1.6" fill="#e0e0e0"/><rect x="0" y="13.0" width="22" height="1.6" fill="#e0e0e0"/></svg>
<div class="r" style="left:763.5px;top:146.0px;width:1.2px;height:36.0px;background:#5e5e5e;"></div>
<svg style="left:772px;top:150px" width="28" height="28" viewBox="0 0 28 28"><text x="-1" y="19" font-size="14.5" fill="#d8d8d8" transform="rotate(-45 9 11)" font-family="Liberation Sans">ab</text><path d="M9.5 24 L25 8.5 M17.5 8 H25.5 V16" stroke="#3f95e0" stroke-width="1.8" fill="none"/></svg>
<svg style="left:805.75px;top:164px" width="10.5" height="8" viewBox="0 0 10.5 8"><path d="M1 1.5 L5.25 6.175000000000001 L9.5 1.5" stroke="#e6e6e6" stroke-width="1.9" fill="none"/></svg>
<div class="r" style="left:851.5px;top:144.0px;width:1.2px;height:94.0px;background:#5e5e5e;"></div>
<svg style="left:869px;top:151px" width="26" height="26" viewBox="0 0 26 26"><text x="0.5" y="12.3" font-size="14" fill="#d8d8d8" font-family="Liberation Sans">ab</text><text x="0.5" y="23.5" font-size="14" fill="#d8d8d8" font-family="Liberation Sans">c</text><path d="M21 14 C22 20 18 22.5 11.5 22.5 M15 19 L11.5 22.5 L15 26" stroke="#3f95e0" stroke-width="1.8" fill="none"/></svg>
<div class="t" style="top:156.5px;font-size:17.5px;color:#f0f0f0;font-weight:normal;left:897.3px;">Wrap Text</div>
<svg style="left:653px;top:201px" width="26" height="30" viewBox="0 0 26 30"><rect x="0" y="0.0" width="22" height="1.6" fill="#e0e0e0"/><rect x="0" y="6.5" width="10" height="1.6" fill="#e0e0e0"/><rect x="0" y="13.0" width="22" height="1.6" fill="#e0e0e0"/><rect x="0" y="19.5" width="14" height="1.6" fill="#e0e0e0"/></svg>
<svg style="left:692px;top:201px" width="26" height="30" viewBox="0 0 26 30"><rect x="0" y="0.0" width="22" height="1.6" fill="#e0e0e0"/><rect x="4" y="6.5" width="14" height="1.6" fill="#e0e0e0"/><rect x="0" y="13.0" width="22" height="1.6" fill="#e0e0e0"/><rect x="4" y="19.5" width="14" height="1.6" fill="#e0e0e0"/></svg>
<svg style="left:731px;top:201px" width="26" height="30" viewBox="0 0 26 30"><rect x="0" y="0.0" width="22" height="1.6" fill="#e0e0e0"/><rect x="8" y="6.5" width="14" height="1.6" fill="#e0e0e0"/><rect x="0" y="13.0" width="22" height="1.6" fill="#e0e0e0"/><rect x="8" y="19.5" width="14" height="1.6" fill="#e0e0e0"/></svg>
<div class="r" style="left:763.5px;top:194.0px;width:1.2px;height:36.0px;background:#5e5e5e;"></div>
<svg style="left:773px;top:201px" width="24" height="24" viewBox="0 0 24 24"><rect x="0" y="0" width="22" height="1.6" fill="#e0e0e0"/><rect x="12" y="6" width="10" height="1.6" fill="#e0e0e0"/><rect x="12" y="12" width="10" height="1.6" fill="#e0e0e0"/><rect x="0" y="18" width="22" height="1.6" fill="#e0e0e0"/><path d="M1 9.5 H9 M4.5 6 L1 9.5 L4.5 13" stroke="#3f95e0" stroke-width="1.7" fill="none"/></svg>
<svg style="left:812px;top:201px" width="24" height="24" viewBox="0 0 24 24"><rect x="0" y="0" width="22" height="1.6" fill="#e0e0e0"/><rect x="12" y="6" width="10" height="1.6" fill="#e0e0e0"/><rect x="12" y="12" width="10" height="1.6" fill="#e0e0e0"/><rect x="0" y="18" width="22" height="1.6" fill="#e0e0e0"/><path d="M0 9.5 H9 M5.5 6 L9 9.5 L5.5 13" stroke="#3f95e0" stroke-width="1.7" fill="none"/></svg>
<svg style="left:866px;top:199px" width="26" height="26" viewBox="0 0 26 26"><rect x="1.5" y="1.5" width="22" height="22" stroke="#d8d8d8" stroke-width="1.5" fill="none"/><path d="M1.5 7 H23.5 M1.5 18 H23.5 M12.5 1.5 V7 M12.5 18 V23.5" stroke="#d8d8d8" stroke-width="1.4"/><rect x="1.5" y="7" width="22" height="11" stroke="#3f95e0" stroke-width="1.5" fill="none"/><path d="M4.5 12.5 H20.5 M7.5 9.5 L4.5 12.5 L7.5 15.5 M17.5 9.5 L20.5 12.5 L17.5 15.5" stroke="#e8e8e8" stroke-width="1.4" fill="none"/></svg>
<div class="t" style="top:204.1px;font-size:17.5px;color:#f0f0f0;font-weight:normal;left:897.0px;">Merge &amp; Center</div>
<svg style="left:1049.75px;top:210px" width="10.5" height="8" viewBox="0 0 10.5 8"><path d="M1 1.5 L5.25 6.175000000000001 L9.5 1.5" stroke="#e6e6e6" stroke-width="1.9" fill="none"/></svg>
<div class="t" style="top:254.2px;font-size:15.8px;color:#f0f0f0;font-weight:normal;left:810.0px;">Alignment</div>
<svg style="left:1066px;top:256px" width="14" height="14" viewBox="0 0 14 14"><path d="M1 13 V1 H13 M4 4 L12 12 M12 6.5 V12 H6.5" stroke="#e0e0e0" stroke-width="1.5" fill="none"/></svg>
<div class="r" style="left:1083.3px;top:135.0px;width:1.2px;height:134.0px;background:#5e5e5e;"></div>
<div class="r" style="left:1096.5px;top:146.4px;width:216px;height:34px;border:1.3px solid #6e6e6e;border-radius:5px;"></div>
<div class="t" style="top:156.6px;font-size:17.5px;color:#f0f0f0;font-weight:normal;left:1100.0px;">General</div>
<svg style="left:1300.75px;top:161px" width="10.5" height="8" viewBox="0 0 10.5 8"><path d="M1 1.5 L5.25 6.175000000000001 L9.5 1.5" stroke="#e6e6e6" stroke-width="1.9" fill="none"/></svg>
<div class="t" style="top:200.2px;font-size:24.5px;color:#d6d6d6;font-weight:normal;left:1106.5px;transform:scaleX(0.85);transform-origin:0 0;">$</div>
<svg style="left:1137.6px;top:210px" width="8.8" height="8" viewBox="0 0 8.8 8"><path d="M1 1.5 L4.4 5.24 L7.8 1.5" stroke="#e6e6e6" stroke-width="1.9" fill="none"/></svg>
<div class="t" style="top:198.4px;font-size:29px;color:#d6d6d6;font-weight:normal;left:1163.0px;transform:scaleX(0.78);transform-origin:0 0;">%</div>
<svg style="left:1207px;top:201.5px" width="16" height="22" viewBox="0 0 16 22"><circle cx="8" cy="6" r="4.6" fill="#cfcfcf"/><path d="M10.5 7 C12 12 9 17 3.5 19.5 L3 18 C6.5 15.5 8 12.5 7.5 9 Z" fill="#cfcfcf"/></svg>
<div class="r" style="left:1235.5px;top:194.0px;width:1.2px;height:36.0px;background:#5e5e5e;"></div>
<svg style="left:1243px;top:199px" width="30" height="28" viewBox="0 0 30 28"><text x="8.5" y="11.5" font-size="14" fill="#d6d6d6" font-family="Liberation Sans">.0</text><text x="3.5" y="23.5" font-size="14" fill="#d6d6d6" font-family="Liberation Sans">.00</text><path d="M2 6.5 H14 M6 2.5 L2 6.5 L6 10.5" stroke="#3f95e0" stroke-width="1.8" fill="none"/></svg>
<svg style="left:1282px;top:199px" width="30" height="28" viewBox="0 0 30 28"><text x="6.5" y="11.5" font-size="14" fill="#d6d6d6" font-family="Liberation Sans">.00</text><text x="12.5" y="23.5" font-size="14" fill="#d6d6d6" font-family="Liberation Sans">.0</text><path d="M2 18.5 H13 M9 14.5 L13 18.5 L9 22.5" stroke="#3f95e0" stroke-width="1.8" fill="none"/></svg>
<div class="t" style="top:255.2px;font-size:15.8px;color:#f0f0f0;font-weight:normal;left:1163.0px;">Number</div>
<svg style="left:1308px;top:256px" width="14" height="14" viewBox="0 0 14 14"><path d="M1 13 V1 H13 M4 4 L12 12 M12 6.5 V12 H6.5" stroke="#e0e0e0" stroke-width="1.5" fill="none"/></svg>
<div class="r" style="left:1325.8px;top:135.0px;width:1.2px;height:134.0px;background:#5e5e5e;"></div>
<svg style="left:1343px;top:144px" width="50" height="38" viewBox="0 0 50 38"><rect x="4" y="2" width="41" height="32" stroke="#cfcfcf" stroke-width="1.8" fill="none"/><path d="M4 12.5 H45 M4 23.5 H45 M18 2 V34 M31 2 V34" stroke="#cfcfcf" stroke-width="1.6"/><rect x="14" y="13" width="31" height="10" fill="#1d7fd6"/><path d="M1.5 18 H14 M7 12 L1.5 18 L7 24" stroke="#59a6e6" stroke-width="1.8" fill="none"/></svg>
<div class="t" style="top:195.5px;font-size:17.5px;color:#f0f0f0;font-weight:normal;left:1347.0px;">Insert</div>
<svg style="left:1364.675px;top:222px" width="9.649999999999999" height="8" viewBox="0 0 9.649999999999999 8"><path d="M1 1.5 L4.824999999999999 5.7075000000000005 L8.649999999999999 1.5" stroke="#e6e6e6" stroke-width="1.9" fill="none"/></svg>
<svg style="left:1409px;top:144px" width="50" height="38" viewBox="0 0 50 38"><rect x="4" y="2" width="41" height="32" stroke="#cfcfcf" stroke-width="1.8" fill="none"/><path d="M4 12.5 H45 M4 23.5 H45 M18 2 V34 M31 2 V34" stroke="#cfcfcf" stroke-width="1.6"/><rect x="10" y="13" width="22" height="10" fill="#1d7fd6"/><path d="M31 12 L44 25 M44 12 L31 25" stroke="#e05050" stroke-width="2"/></svg>
<div class="t" style="top:195.5px;font-size:17.5px;color:#f0f0f0;font-weight:normal;left:1409.0px;">Delete</div>
<svg style="left:1428.675px;top:222px" width="9.649999999999999" height="8" viewBox="0 0 9.649999999999999 8"><path d="M1 1.5 L4.824999999999999 5.7075000000000005 L8.649999999999999 1.5" stroke="#e6e6e6" stroke-width="1.9" fill="none"/></svg>
<svg style="left:1476px;top:136px" width="50" height="44" viewBox="0 0 50 44"><path d="M10.5 2 H33.5 M10.5 0 V4 M33.5 0 V4" stroke="#59a6e6" stroke-width="1.6"/><rect x="3.5" y="8" width="41" height="33" stroke="#cfcfcf" stroke-width="1.8" fill="none"/><path d="M3.5 19 H44.5 M3.5 30 H44.5 M14 8 V41 M34 8 V41" stroke="#cfcfcf" stroke-width="1.6"/><rect x="14" y="19.5" width="20" height="10" fill="#1d7fd6"/></svg>
<div class="t" style="top:193.6px;font-size:17.5px;color:#f0f0f0;font-weight:normal;left:1472.0px;">Format</div>
<svg style="left:1494.675px;top:220px" width="9.649999999999999" height="8" viewBox="0 0 9.649999999999999 8"><path d="M1 1.5 L4.824999999999999 5.7075000000000005 L8.649999999999999 1.5" stroke="#e6e6e6" stroke-width="1.9" fill="none"/></svg>
<div class="t" style="top:255.7px;font-size:15.8px;color:#f0f0f0;font-weight:normal;left:1418.0px;">Cells</div>
<div class="r" style="left:1544.5px;top:135.0px;width:1.2px;height:134.0px;background:#5e5e5e;"></div>
<svg style="left:1564px;top:140px" width="22" height="24" viewBox="0 0 22 24"><path d="M19 4 V1.5 H2 L10.5 11.5 L2 21.5 H19.5 V19" stroke="#dcdcdc" stroke-width="1.8" fill="none" stroke-linejoin="miter"/></svg>
<div class="t" style="top:144.8px;font-size:17.5px;color:#f0f0f0;font-weight:normal;left:1593.0px;">AutoSum</div>
<svg style="left:1693.675px;top:152px" width="9.649999999999999" height="8" viewBox="0 0 9.649999999999999 8"><path d="M1 1.5 L4.824999999999999 5.7075000000000005 L8.649999999999999 1.5" stroke="#e6e6e6" stroke-width="1.9" fill="none"/></svg>
<svg style="left:1562px;top:179px" width="26" height="24" viewBox="0 0 26 24"><rect x="1" y="1" width="23" height="21" stroke="#cfcfcf" stroke-width="1.6" fill="none"/><path d="M1 4.5 H24" stroke="#cfcfcf" stroke-width="1.5"/><path d="M12.5 8 V18 M8.5 14 L12.5 18 L16.5 14" stroke="#3f95e0" stroke-width="1.8" fill="none"/></svg>
<div class="t" style="top:183.1px;font-size:17.5px;color:#f0f0f0;font-weight:normal;left:1593.0px;">Fill</div>
<svg style="left:1619.675px;top:189px" width="9.649999999999999" height="8" viewBox="0 0 9.649999999999999 8"><path d="M1 1.5 L4.824999999999999 5.7075000000000005 L8.649999999999999 1.5" stroke="#e6e6e6" stroke-width="1.9" fill="none"/></svg>
<svg style="left:1562px;top:216px" width="26" height="26" viewBox="0 0 26 26"><path d="M13 1.5 L24.5 13 L14 23.5 L2.5 12 Z" stroke="#b45ad8" stroke-width="1.8" fill="none"/><path d="M2.5 12 L8 6.5 L19 17.5 L14 23.5 Z" fill="#b45ad8"/></svg>
<div class="t" style="top:222.6px;font-size:17.5px;color:#f0f0f0;font-weight:normal;left:1593.0px;">Clear</div>
<svg style="left:1639.675px;top:229px" width="9.649999999999999" height="8" viewBox="0 0 9.649999999999999 8"><path d="M1 1.5 L4.824999999999999 5.7075000000000005 L8.649999999999999 1.5" stroke="#e6e6e6" stroke-width="1.9" fill="none"/></svg>
<svg style="left:1728px;top:139px" width="48" height="46" viewBox="0 0 48 46"><text x="1" y="17" font-size="20" fill="#3f95e0" font-family="Liberation Sans">A</text><text x="2" y="39" font-size="20" fill="#d8d8d8" font-family="Liberation Sans">Z</text><path d="M19.5 11 H43 L35 22 V33 H28.5 V22 Z" stroke="#d8d8d8" stroke-width="1.7" fill="none" stroke-linejoin="round"/></svg>
<div class="t" style="top:194.1px;font-size:17.5px;color:#f0f0f0;font-weight:normal;left:1725.0px;">Sort &amp;</div>
<div class="t" style="top:217.8px;font-size:17.5px;color:#f0f0f0;font-weight:normal;left:1724.0px;">Filter</div>
<svg style="left:1771.675px;top:223px" width="9.649999999999999" height="8" viewBox="0 0 9.649999999999999 8"><path d="M1 1.5 L4.824999999999999 5.7075000000000005 L8.649999999999999 1.5" stroke="#e6e6e6" stroke-width="1.9" fill="none"/></svg>
<svg style="left:1796px;top:139px" width="50" height="46" viewBox="0 0 50 46"><circle cx="30" cy="16" r="14.5" stroke="#d8d8d8" stroke-width="1.8" fill="none"/><path d="M19.5 26.5 L2 43" stroke="#d8d8d8" stroke-width="1.8"/></svg>
<div class="t" style="top:194.1px;font-size:17.5px;color:#f0f0f0;font-weight:normal;left:1795.0px;">Find &amp;</div>
<div class="t" style="top:217.8px;font-size:17.5px;color:#f0f0f0;font-weight:normal;left:1790.0px;">Select</div>
<svg style="left:1843.675px;top:223px" width="9.649999999999999" height="8" viewBox="0 0 9.649999999999999 8"><path d="M1 1.5 L4.824999999999999 5.7075000000000005 L8.649999999999999 1.5" stroke="#e6e6e6" stroke-width="1.9" fill="none"/></svg>
<div class="t" style="top:255.7px;font-size:15.8px;color:#f0f0f0;font-weight:normal;left:1682.0px;">Editing</div>
<div class="r" style="left:1868.3px;top:135.0px;width:1.2px;height:134.0px;background:#5e5e5e;"></div>
<svg style="left:1893px;top:139px" width="46" height="46" viewBox="0 0 46 46"><rect x="2" y="2" width="41" height="41" stroke="#cf4b22" stroke-width="2.4" fill="none"/><rect x="6.5" y="6.5" width="13" height="13" stroke="#cf4b22" stroke-width="2" fill="none"/><rect x="24.5" y="6.5" width="13" height="13" stroke="#cf4b22" stroke-width="2" fill="none"/><rect x="6.5" y="24.5" width="13" height="13" stroke="#cf4b22" stroke-width="2" fill="none"/><rect x="24.5" y="24.5" width="13" height="13" stroke="#cf4b22" stroke-width="2" fill="none"/></svg>
<div class="t" style="top:194.1px;font-size:17.5px;color:#f0f0f0;font-weight:normal;left:1885.0px;">Add-ins</div>
<div class="t" style="top:255.7px;font-size:15.8px;color:#f0f0f0;font-weight:normal;left:1888.0px;">Add-ins</div>
<div class="r" style="left:1963.3px;top:135.0px;width:1.2px;height:134.0px;background:#5e5e5e;"></div>
<svg style="left:1988px;top:140px" width="46" height="46" viewBox="0 0 46 46"><rect x="1.5" y="1.5" width="41" height="41" stroke="#cfcfcf" stroke-width="1.6" fill="none"/><rect x="1.5" y="1.5" width="41" height="4" fill="#8a8a8a"/><path d="M1.5 15 H42.5 M1.5 25 H42.5 M1.5 34 H42.5 M14 5 V42.5 M28 5 V42.5" stroke="#8a8a8a" stroke-width="1.3"/><circle cx="20" cy="19" r="11.5" stroke="#e0e0e0" stroke-width="1.8" fill="#2a2a2a"/><path d="M28 27.5 L41 41" stroke="#e0e0e0" stroke-width="1.8"/><rect x="13" y="18" width="3" height="6" fill="#999"/><rect x="17.5" y="13" width="3" height="11" fill="#ccc"/><rect x="22" y="16" width="3.5" height="8" fill="#3f95e0"/></svg>
<div class="t" style="top:194.1px;font-size:17.5px;color:#f0f0f0;font-weight:normal;left:1980.0px;">Analyze</div>
<div class="t" style="top:217.8px;font-size:17.5px;color:#f0f0f0;font-weight:normal;left:1994.0px;">Data</div>
<div class="r" style="left:2056.5px;top:135.0px;width:1.2px;height:134.0px;background:#5e5e5e;"></div>
<div class="r" style="left:2156px;top:142.5px;width:112px;height:112px;border-radius:50%;background:#fff;"></div>
<svg style="left:2181px;top:172.5px" width="62" height="54" viewBox="0 0 62 54"><rect x="0" y="0" width="62" height="53" fill="#5e5ee6"/><rect x="8.5" y="8.5" width="19" height="14" fill="#fff"/><rect x="34.5" y="8.5" width="19" height="14" fill="#fff"/><rect x="8.5" y="30.5" width="19" height="14" fill="#fff"/><rect x="34.5" y="30.5" width="19" height="14" fill="#fff"/></svg>
<div class="t" style="top:156.5px;font-size:50px;color:#fff;font-weight:bold;left:2293.4px;transform:scaleX(0.812);transform-origin:0 0;-webkit-text-stroke:1.6px #fff;">F</div>
<div class="t" style="top:156.5px;font-size:50px;color:#fff;font-weight:bold;left:2319.2px;transform:scaleX(0.863);transform-origin:0 0;-webkit-text-stroke:1.6px #fff;">I</div>
<div class="t" style="top:156.5px;font-size:50px;color:#fff;font-weight:bold;left:2332.2px;transform:scaleX(1.000);transform-origin:0 0;-webkit-text-stroke:1.6px #fff;">N</div>
<div class="t" style="top:156.5px;font-size:50px;color:#fff;font-weight:bold;left:2368.7px;transform:scaleX(1.036);transform-origin:0 0;-webkit-text-stroke:1.6px #fff;">M</div>
<div class="t" style="top:156.5px;font-size:50px;color:#fff;font-weight:bold;left:2412.9px;transform:scaleX(0.971);transform-origin:0 0;-webkit-text-stroke:1.6px #fff;">O</div>
<div class="t" style="top:156.5px;font-size:50px;color:#fff;font-weight:bold;left:2451.0px;transform:scaleX(0.916);transform-origin:0 0;-webkit-text-stroke:1.6px #fff;">D</div>
<div class="t" style="top:156.5px;font-size:50px;color:#fff;font-weight:bold;left:2486.7px;transform:scaleX(0.672);transform-origin:0 0;-webkit-text-stroke:1.6px #fff;">E</div>
<div class="t" style="top:156.5px;font-size:50px;color:#fff;font-weight:bold;left:2512.1px;transform:scaleX(0.688);transform-origin:0 0;-webkit-text-stroke:1.6px #fff;">L</div>
<div class="t" style="top:156.5px;font-size:50px;color:#fff;font-weight:bold;left:2535.0px;transform:scaleX(0.787);transform-origin:0 0;-webkit-text-stroke:1.6px #fff;">S</div>
<div class="t" style="top:156.5px;font-size:50px;color:#fff;font-weight:bold;left:2563.6px;transform:scaleX(0.719);transform-origin:0 0;-webkit-text-stroke:1.6px #fff;">L</div>
<div class="t" style="top:156.5px;font-size:50px;color:#fff;font-weight:bold;left:2586.7px;transform:scaleX(0.956);transform-origin:0 0;-webkit-text-stroke:1.6px #fff;">A</div>
<div class="t" style="top:156.5px;font-size:50px;color:#fff;font-weight:bold;left:2622.1px;transform:scaleX(0.839);transform-origin:0 0;-webkit-text-stroke:1.6px #fff;">B</div>
<div class="r" style="left:2423.0px;top:156.0px;width:17.0px;height:15.5px;background:#292929;"></div>
<div class="r" style="left:2426.6px;top:154.9px;width:10.0px;height:27.1px;background:#ffffff;border-radius:5px;"></div>
<div class="t" style="top:207.8px;font-size:35.7px;color:#fff;font-weight:normal;left:2295.2px;transform:scaleX(1.043);transform-origin:0 0;-webkit-text-stroke:0.5px #fff;">T</div>
<div class="t" style="top:207.8px;font-size:35.7px;color:#fff;font-weight:normal;left:2337.0px;transform:scaleX(1.089);transform-origin:0 0;-webkit-text-stroke:0.5px #fff;">e</div>
<div class="t" style="top:207.8px;font-size:35.7px;color:#fff;font-weight:normal;left:2380.5px;transform:scaleX(1.123);transform-origin:0 0;-webkit-text-stroke:0.5px #fff;">m</div>
<div class="t" style="top:207.8px;font-size:35.7px;color:#fff;font-weight:normal;left:2436.0px;transform:scaleX(1.147);transform-origin:0 0;-webkit-text-stroke:0.5px #fff;">p</div>
<div class="t" style="top:207.8px;font-size:35.7px;color:#fff;font-weight:normal;left:2480.8px;transform:scaleX(1.050);transform-origin:0 0;-webkit-text-stroke:0.5px #fff;">l</div>
<div class="t" style="top:207.8px;font-size:35.7px;color:#fff;font-weight:normal;left:2511.3px;transform:scaleX(0.926);transform-origin:0 0;-webkit-text-stroke:0.5px #fff;">a</div>
<div class="t" style="top:207.8px;font-size:35.7px;color:#fff;font-weight:normal;left:2554.2px;transform:scaleX(1.150);transform-origin:0 0;-webkit-text-stroke:0.5px #fff;">t</div>
<div class="t" style="top:207.8px;font-size:35.7px;color:#fff;font-weight:normal;left:2589.5px;transform:scaleX(1.067);transform-origin:0 0;-webkit-text-stroke:0.5px #fff;">e</div>
<div class="t" style="top:207.8px;font-size:35.7px;color:#fff;font-weight:normal;left:2633.1px;transform:scaleX(1.050);transform-origin:0 0;-webkit-text-stroke:0.5px #fff;">s</div>
<svg style="left:2849px;top:251px" width="18" height="12" viewBox="0 0 18 12"><path d="M1.5 2 L8.5 9 L15.5 2" stroke="#e6e6e6" stroke-width="1.7" fill="none"/></svg>
<svg style="left:2869px;top:285px" width="15" height="12" viewBox="0 0 15 12"><path d="M7.2 1.5 L13 10.5 H1.5 Z" fill="#9b9b9b" stroke="#9b9b9b" stroke-width="1.8" stroke-linejoin="round"/></svg>
<div class="r" style="left:2870.0px;top:303.7px;width:12.2px;height:1311.3px;background:#9d9d9d;border-radius:6px;"></div>
<svg style="left:2869px;top:1653px" width="15" height="12" viewBox="0 0 15 12"><path d="M1.5 1.5 H13 L7.2 10.5 Z" fill="#9b9b9b" stroke="#9b9b9b" stroke-width="1.8" stroke-linejoin="round"/></svg>
<div class="r" style="left:11.0px;top:1670.0px;width:2879.0px;height:48.0px;background:#0a0a0a;"></div>
<svg style="left:40px;top:1685px" width="14" height="22" viewBox="0 0 14 22"><path d="M10 2 L3 11 L10 20" stroke="#9a9a9a" stroke-width="1.8" fill="none"/></svg>
<svg style="left:92px;top:1685px" width="14" height="22" viewBox="0 0 14 22"><path d="M3 2 L10 11 L3 20" stroke="#cfcfcf" stroke-width="1.8" fill="none"/></svg>
<div class="t" style="top:1686.2px;font-size:20.5px;color:#f0f0f0;font-weight:normal;left:190.0px;">Contents</div>
<div class="r" style="left:292.2px;top:1679.8px;width:1.0px;height:28.0px;background:#5c5c5c;"></div>
<div class="r" style="left:299px;top:1676.1px;width:127.5px;height:35.6px;background:#fde96e;border-radius:6px;"></div>
<div class="t" style="top:1686.2px;font-size:20.5px;color:#1a1a1a;font-weight:normal;left:-237.2px;width:1200px;text-align:center;">Dashboard</div>
<div class="r" style="left:433.1px;top:1679.8px;width:1.0px;height:28.0px;background:#5c5c5c;"></div>
<div class="r" style="left:440.4px;top:1676.1px;width:105.10000000000002px;height:35.6px;background:#fde96e;border-radius:6px;"></div>
<div class="t" style="top:1686.2px;font-size:20.5px;color:#1a1a1a;font-weight:normal;left:-107.1px;width:1200px;text-align:center;">Revenue</div>
<div class="r" style="left:552.1px;top:1679.8px;width:1.0px;height:28.0px;background:#5c5c5c;"></div>
<div class="r" style="left:559px;top:1676.1px;width:157px;height:35.6px;background:#fde96e;border-radius:6px;"></div>
<div class="t" style="top:1686.2px;font-size:20.5px;color:#1a1a1a;font-weight:normal;left:37.5px;width:1200px;text-align:center;">COGS &amp; OPEX</div>
<div class="r" style="left:722.6px;top:1679.8px;width:1.0px;height:28.0px;background:#5c5c5c;"></div>
<div class="r" style="left:730px;top:1676.1px;width:88.39999999999998px;height:35.6px;background:#fde96e;border-radius:6px;"></div>
<div class="t" style="top:1686.2px;font-size:20.5px;color:#1a1a1a;font-weight:normal;left:174.2px;width:1200px;text-align:center;">Payroll</div>
<div class="r" style="left:825.0px;top:1679.8px;width:1.0px;height:28.0px;background:#5c5c5c;"></div>
<div class="r" style="left:824.0px;top:1669.0px;width:103.0px;height:10.0px;background:#ffffff;"></div>
<div class="r" style="left:818.6px;top:1670.3px;width:13px;height:20px;background:#0a0a0a;border-top-right-radius:7px;"></div>
<div class="r" style="left:919.2px;top:1670.3px;width:12px;height:20px;background:#0a0a0a;border-top-left-radius:7px;"></div>
<div class="r" style="left:831.6px;top:1669px;width:87.6px;height:43px;background:#fffff5;border-radius:0 0 5px 5px;"></div>
<div class="r" style="left:825.0px;top:1679.8px;width:1.0px;height:28.0px;background:#5c5c5c;"></div>
<div class="t" style="top:1681.1px;font-size:20.3px;color:#1a1a1a;font-weight:normal;left:274.9px;width:1200px;text-align:center;">CAPEX</div>
<div class="r" style="left:844.3px;top:1705.1px;width:62.7px;height:2.7px;background:#1b7f3b;"></div>
<div class="r" style="left:925.4px;top:1679.8px;width:1.0px;height:28.0px;background:#5c5c5c;"></div>
<div class="r" style="left:931.6px;top:1676.1px;width:112.99999999999989px;height:35.6px;background:#fde96e;border-radius:6px;"></div>
<div class="t" style="top:1686.2px;font-size:20.5px;color:#1a1a1a;font-weight:normal;left:388.1px;width:1200px;text-align:center;">CapTable</div>
<div class="r" style="left:1051.2px;top:1679.8px;width:1.0px;height:28.0px;background:#5c5c5c;"></div>
<div class="r" style="left:1058.4px;top:1676.1px;width:89.5px;height:35.6px;background:#fde96e;border-radius:6px;"></div>
<div class="t" style="top:1686.2px;font-size:20.5px;color:#1a1a1a;font-weight:normal;left:503.2px;width:1200px;text-align:center;">Capital</div>
<div class="r" style="left:1154.5px;top:1679.8px;width:1.0px;height:28.0px;background:#5c5c5c;"></div>
<div class="r" style="left:1161.4px;top:1676.1px;width:41.299999999999955px;height:35.6px;background:#4db3e8;border-radius:6px;"></div>
<div class="t" style="top:1686.2px;font-size:20.5px;color:#1a1a1a;font-weight:normal;left:582.1px;width:1200px;text-align:center;">IS</div>
<div class="r" style="left:1209.3px;top:1679.8px;width:1.0px;height:28.0px;background:#5c5c5c;"></div>
<div class="r" style="left:1216.2px;top:1676.1px;width:47.5px;height:35.6px;background:#4db3e8;border-radius:6px;"></div>
<div class="t" style="top:1686.2px;font-size:20.5px;color:#1a1a1a;font-weight:normal;left:640.0px;width:1200px;text-align:center;">CF</div>
<div class="r" style="left:1270.3px;top:1679.8px;width:1.0px;height:28.0px;background:#5c5c5c;"></div>
<div class="r" style="left:1277.6px;top:1676.1px;width:46.700000000000045px;height:35.6px;background:#4db3e8;border-radius:6px;"></div>
<div class="t" style="top:1686.2px;font-size:20.5px;color:#1a1a1a;font-weight:normal;left:700.9px;width:1200px;text-align:center;">BS</div>
<div class="r" style="left:1330.9px;top:1679.8px;width:1.0px;height:28.0px;background:#5c5c5c;"></div>
<div class="r" style="left:1338.6px;top:1676.1px;width:114.30000000000018px;height:35.6px;background:#4db3e8;border-radius:6px;"></div>
<div class="t" style="top:1686.2px;font-size:20.5px;color:#1a1a1a;font-weight:normal;left:795.8px;width:1200px;text-align:center;">Scenarios</div>
<div class="r" style="left:1459.5px;top:1679.8px;width:1.0px;height:28.0px;background:#5c5c5c;"></div>
<div class="r" style="left:1466.4px;top:1676.1px;width:114.29999999999995px;height:35.6px;background:#4db3e8;border-radius:6px;"></div>
<div class="t" style="top:1686.2px;font-size:20.5px;color:#1a1a1a;font-weight:normal;left:923.6px;width:1200px;text-align:center;">Valuation</div>
<div class="r" style="left:1587.3px;top:1679.8px;width:1.0px;height:28.0px;background:#5c5c5c;"></div>
<div class="r" style="left:1594.6px;top:1676.1px;width:113.20000000000005px;height:35.6px;background:#4db3e8;border-radius:6px;"></div>
<div class="t" style="top:1686.2px;font-size:20.5px;color:#1a1a1a;font-weight:normal;left:1051.2px;width:1200px;text-align:center;">Summary</div>
<div class="r" style="left:1714.4px;top:1679.8px;width:1.0px;height:28.0px;background:#5c5c5c;"></div>
<div class="r" style="left:1721.3px;top:1676.1px;width:47.5px;height:35.6px;background:#4db3e8;border-radius:6px;"></div>
<div class="t" style="top:1686.2px;font-size:20.5px;color:#1a1a1a;font-weight:normal;left:1145.0px;width:1200px;text-align:center;">BE</div>
<div class="r" style="left:1775.4px;top:1679.8px;width:1.0px;height:28.0px;background:#5c5c5c;"></div>
<div class="r" style="left:1782.3px;top:1676.1px;width:71.60000000000014px;height:35.6px;background:#4db3e8;border-radius:6px;"></div>
<div class="t" style="top:1686.2px;font-size:20.5px;color:#1a1a1a;font-weight:normal;left:1218.1px;width:1200px;text-align:center;">ROIC</div>
<div class="r" style="left:1860.5px;top:1679.8px;width:1.0px;height:28.0px;background:#5c5c5c;"></div>
<div class="r" style="left:1867px;top:1676.1px;width:84.59999999999991px;height:35.6px;background:#4db3e8;border-radius:6px;"></div>
<div class="t" style="top:1686.2px;font-size:20.5px;color:#1a1a1a;font-weight:normal;left:1309.3px;width:1200px;text-align:center;">Charts</div>
<div class="r" style="left:1958.2px;top:1679.8px;width:1.0px;height:28.0px;background:#5c5c5c;"></div>
<div class="r" style="left:1965.3px;top:1676.1px;width:63.200000000000045px;height:35.6px;background:#4db3e8;border-radius:6px;"></div>
<div class="t" style="top:1686.2px;font-size:20.5px;color:#1a1a1a;font-weight:normal;left:1396.9px;width:1200px;text-align:center;">KPIs</div>
<div class="r" style="left:2035.1px;top:1679.8px;width:1.0px;height:28.0px;background:#5c5c5c;"></div>
<div class="r" style="left:2042px;top:1676.4px;width:30px;height:34.6px;background:#4db3e8;border-radius:6px 0 0 6px;overflow:hidden;"><div class="t" style="left:6px;top:8.4px;font-size:20.5px;color:#1a1a1a;">Sc</div></div>
<svg style="left:2086px;top:1689px" width="20" height="6" viewBox="0 0 20 6"><circle cx="2.5" cy="3" r="2.2" fill="#eee"/><circle cx="9" cy="3" r="2.2" fill="#eee"/><circle cx="15.5" cy="3" r="2.2" fill="#eee"/></svg>
<svg style="left:2133px;top:1683px" width="20" height="20" viewBox="0 0 20 20"><path d="M10 1 V19 M1 10 H19" stroke="#eee" stroke-width="1.8"/></svg>
<svg style="left:2189px;top:1683px" width="8" height="22" viewBox="0 0 8 22"><circle cx="3.5" cy="3" r="1.8" fill="#eee"/><circle cx="3.5" cy="10.5" r="1.8" fill="#eee"/><circle cx="3.5" cy="18" r="1.8" fill="#eee"/></svg>
<div class="r" style="left:2216.0px;top:1680.3px;width:644.0px;height:25.7px;background:#141414;border-radius:13px;"></div>
<svg style="left:2225px;top:1685px" width="12" height="16" viewBox="0 0 12 16"><path d="M10 1.5 V14.5 L1.5 8 Z" fill="#9b9b9b" stroke="#9b9b9b" stroke-width="1.2" stroke-linejoin="round"/></svg>
<div class="r" style="left:2242.0px;top:1686.0px;width:55.5px;height:13.5px;background:#a3a3a3;border-radius:7px;"></div>
<svg style="left:2847px;top:1685px" width="12" height="16" viewBox="0 0 12 16"><path d="M1.5 1.5 V14.5 L10 8 Z" fill="#9b9b9b" stroke="#9b9b9b" stroke-width="1.2" stroke-linejoin="round"/></svg>
<div class="r" style="left:11.0px;top:1717.4px;width:2879.0px;height:33.6px;background:#161616;"></div>
<div class="r" style="left:11.0px;top:1717.0px;width:2879.0px;height:1.2px;background:#2e2e2e;"></div>
<div class="t" style="top:1727.2px;font-size:17px;color:#e8e8e8;font-weight:normal;left:27.3px;">Ready</div>
<svg style="left:98px;top:1725px" width="26" height="24" viewBox="0 0 26 24"><path d="M1.5 21 V2 H20 V9" stroke="#e8e8e8" stroke-width="1.6" fill="none"/><path d="M1.5 6 H20 M5 10 H9 M5 14 H9 M5 18 H9" stroke="#e8e8e8" stroke-width="1.4"/><circle cx="16" cy="16" r="6" stroke="#e8e8e8" stroke-width="1.6" fill="none"/><circle cx="16" cy="16" r="2.6" fill="#e8e8e8"/></svg>
<svg style="left:145px;top:1724px" width="24" height="26" viewBox="0 0 24 26"><circle cx="10" cy="3.5" r="2.5" stroke="#e8e8e8" stroke-width="1.5" fill="none"/><path d="M2 8 L10 10 L18 7 M10 10 V16 L5 24 M10 16 L12 19 M14 17 L21 24 M21 17 L14 24" stroke="#e8e8e8" stroke-width="1.6" fill="none"/></svg>
<div class="t" style="top:1728.3px;font-size:15.7px;color:#f4f4f4;font-weight:bold;left:173.4px;">Accessibility: Investigate</div>
<div class="r" style="left:2445.0px;top:1718.2px;width:59.6px;height:32.8px;background:#262626;"></div>
<svg style="left:2463px;top:1723px" width="24" height="22" viewBox="0 0 24 22"><rect x="1" y="1" width="20" height="19" stroke="#eee" stroke-width="1.6" fill="none"/><path d="M1 7.3 H21 M1 13.6 H21 M7.7 1 V20 M14.3 1 V20" stroke="#eee" stroke-width="1.5"/></svg>
<svg style="left:2523px;top:1723px" width="24" height="22" viewBox="0 0 24 22"><rect x="1" y="1" width="21" height="19" stroke="#eee" stroke-width="1.6" fill="none"/><rect x="5" y="4" width="13" height="13" stroke="#eee" stroke-width="1.4" fill="none"/><path d="M8 8 H15 M8 11 H15 M8 14 H15" stroke="#eee" stroke-width="1.2"/></svg>
<svg style="left:2583px;top:1723px" width="24" height="22" viewBox="0 0 24 22"><rect x="1" y="1" width="21" height="19" stroke="#eee" stroke-width="1.6" fill="none"/><path d="M8 1 V12 H15 V1" stroke="#eee" stroke-width="1.6" fill="none"/></svg>
<div class="r" style="left:2632.0px;top:1733.8px;width:13.0px;height:1.5px;background:#ddd;"></div>
<div class="r" style="left:2653.0px;top:1733.6px;width:148.0px;height:2.2px;background:#b8b8b8;"></div>
<div class="r" style="left:2726.5px;top:1730.0px;width:1.7px;height:9.0px;background:#b8b8b8;"></div>
<div class="r" style="left:2733.0px;top:1726.3px;width:8.0px;height:16.7px;background:#b8b8b8;"></div>
<svg style="left:2808px;top:1727.5px" width="14" height="14" viewBox="0 0 14 14"><path d="M6.5 1 V12 M1 6.5 H12" stroke="#ddd" stroke-width="1.5"/></svg>
<div class="t" style="top:1727.8px;font-size:16.3px;color:#e8e8e8;font-weight:normal;left:2840.0px;">140%</div>
</body></html>
